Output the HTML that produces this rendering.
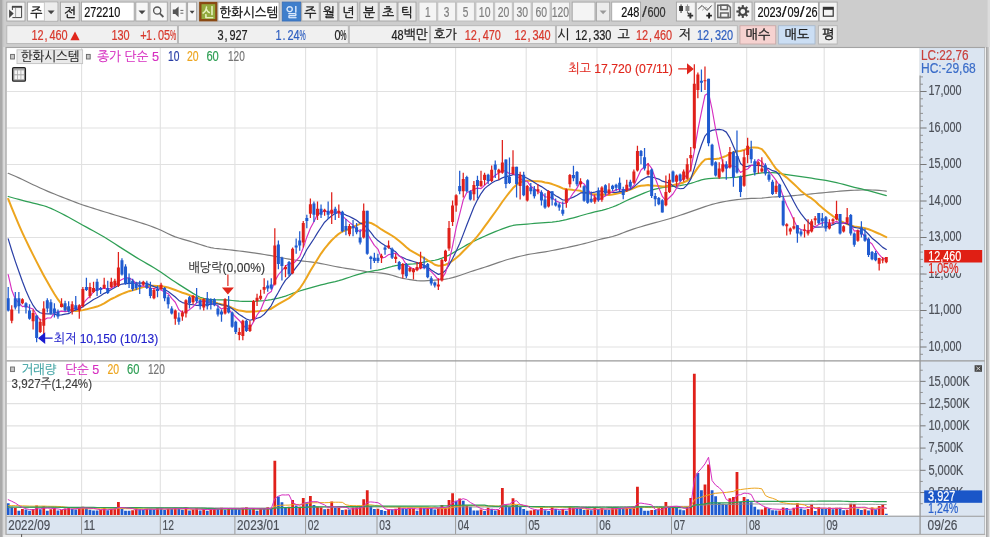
<!DOCTYPE html>
<html lang="ko">
<head>
<meta charset="utf-8">
<title>한화시스템 272210 일봉 차트</title>
<style>
html,body{margin:0;padding:0;background:#cdcdcd;overflow:hidden}
svg{display:block;will-change:transform;transform:translateZ(0);filter:blur(0.3px)}
text{white-space:pre}
</style>
</head>
<body>
<svg width="990" height="537" viewBox="0 0 990 537">
<rect x="0.00" y="0.00" width="990.00" height="537.00" fill="#cdcdcd" />
<rect x="0.00" y="0.00" width="2.40" height="537.00" fill="#a9a9a9" />
<rect x="2.40" y="0.00" width="0.90" height="537.00" fill="#bcbcbc" />
<rect x="3.30" y="47.00" width="2.60" height="490.00" fill="#dcdcdc" />
<rect x="987.60" y="0.00" width="2.40" height="47.00" fill="#dcdcdc" />
<rect x="986.00" y="47.00" width="1.70" height="490.00" fill="#a8a8a8" />
<rect x="987.70" y="47.00" width="1.30" height="490.00" fill="#c6c6c6" />
<rect x="989.00" y="47.00" width="1.00" height="490.00" fill="#e6e6e6" />
<rect x="6.80" y="2.10" width="18.20" height="18.90" fill="#f4f4f4" stroke="#a4a4a4" stroke-width="0.9" />
<g stroke="#444" fill="none"><path d="M12.4 17.6 H21.6 V6.6" stroke-width="1"/><line x1="11.9" y1="6.8" x2="22.1" y2="6.8" stroke-width="1.9"/><line x1="12.4" y1="6.8" x2="12.4" y2="10" stroke-width="1"/><line x1="15.6" y1="8" x2="15.6" y2="17.2" stroke="#999" stroke-width="0.9"/></g><path d="M9.1 9.4 L13.7 13.6 L9.1 17.9 Z" fill="#444"/>
<rect x="27.60" y="2.10" width="30.20" height="18.90" fill="#ffffff" stroke="#a4a4a4" stroke-width="0.9" />
<rect x="44.40" y="2.60" width="12.90" height="17.90" fill="#ededed" />
<line x1="44.40" y1="2.10" x2="44.40" y2="21.00" stroke="#c4c4c4" stroke-width="0.9" />
<text x="30.30" y="16.60" font-size="13" fill="#111" stroke="#111" stroke-width="0.3" font-family="'Liberation Sans','NanumGothic','Noto Sans CJK KR',sans-serif" >주</text>
<path d="M47.6 10.4 L54.6 10.4 L51.1 14.2 Z" fill="#444"/>
<rect x="60.40" y="2.10" width="18.80" height="18.90" fill="#ececec" stroke="#a4a4a4" stroke-width="0.9" />
<text x="63.80" y="16.60" font-size="13" fill="#111" stroke="#111" stroke-width="0.3" font-family="'Liberation Sans','NanumGothic','Noto Sans CJK KR',sans-serif" >전</text>
<rect x="81.40" y="2.10" width="52.80" height="18.90" fill="#ffffff" stroke="#a4a4a4" stroke-width="0.9" />
<text transform="translate(84.20 16.60) scale(0.78 1)" x="0.00 7.69 15.38 23.08 30.77 38.46" y="0" font-size="14" fill="#111" stroke="#111" stroke-width="0.22" font-family="'Liberation Sans','NanumGothic','Noto Sans CJK KR',sans-serif" >272210</text>
<rect x="135.80" y="2.10" width="12.40" height="18.90" fill="#f6f6f6" stroke="#a4a4a4" stroke-width="0.9" />
<path d="M138.5 10.4 L145.5 10.4 L142 14.2 Z" fill="#444"/>
<rect x="150.00" y="2.10" width="17.30" height="18.90" fill="#f6f6f6" stroke="#a4a4a4" stroke-width="0.9" />
<circle cx="157.2" cy="10.6" r="3.6" fill="none" stroke="#555" stroke-width="1.3"/><line x1="159.8" y1="13.4" x2="163.4" y2="17" stroke="#555" stroke-width="1.8"/>
<rect x="170.60" y="2.10" width="15.70" height="18.90" fill="#f6f6f6" stroke="#a4a4a4" stroke-width="0.9" />
<path d="M172.8 9.6 L175.2 9.6 L178.6 6.4 L178.6 17.2 L175.2 14 L172.8 14 Z" fill="#555"/><g stroke="#666" stroke-width="1"><line x1="180.4" y1="10.4" x2="183.4" y2="10.4"/><line x1="180.4" y1="13.2" x2="183.4" y2="13.2"/></g>
<rect x="187.60" y="2.10" width="9.00" height="18.90" fill="#f6f6f6" stroke="#a4a4a4" stroke-width="0.9" />
<path d="M189.6 10.8 L194.6 10.8 L192.1 13.8 Z" fill="#444"/>
<rect x="200.30" y="3.00" width="16.10" height="17.20" fill="#93aa3e" stroke="#8a4a14" stroke-width="2.4" />
<text x="202.20" y="16.60" font-size="13" fill="#eaf3c4" font-family="'Liberation Sans','NanumGothic','Noto Sans CJK KR',sans-serif" stroke="#eaf3c4" stroke-width="0.5">신</text>
<rect x="217.90" y="2.10" width="61.20" height="18.90" fill="#ffffff" stroke="#a4a4a4" stroke-width="0.9" />
<text x="219.60" y="16.60" font-size="13" fill="#111" stroke="#111" stroke-width="0.3" font-family="'Liberation Sans','NanumGothic','Noto Sans CJK KR',sans-serif" textLength="58.5" lengthAdjust="spacingAndGlyphs" >한화시스템</text>
<rect x="282.30" y="2.10" width="18.40" height="18.90" fill="#3f7fcc" stroke="#3a70b8" stroke-width="0.9" />
<text x="285.40" y="16.60" font-size="13" fill="#e6f0ff" stroke="#e6f0ff" stroke-width="0.3" font-family="'Liberation Sans','NanumGothic','Noto Sans CJK KR',sans-serif" >일</text>
<rect x="301.70" y="2.10" width="17.50" height="18.90" fill="#ececec" stroke="#a4a4a4" stroke-width="0.9" />
<text x="310.45" y="16.60" font-size="13" fill="#111" stroke="#111" stroke-width="0.3" font-family="'Liberation Sans','NanumGothic','Noto Sans CJK KR',sans-serif" text-anchor="middle" >주</text>
<rect x="320.40" y="2.10" width="17.40" height="18.90" fill="#ececec" stroke="#a4a4a4" stroke-width="0.9" />
<text x="329.10" y="16.60" font-size="13" fill="#111" stroke="#111" stroke-width="0.3" font-family="'Liberation Sans','NanumGothic','Noto Sans CJK KR',sans-serif" text-anchor="middle" >월</text>
<rect x="338.90" y="2.10" width="18.40" height="18.90" fill="#ececec" stroke="#a4a4a4" stroke-width="0.9" />
<text x="348.10" y="16.60" font-size="13" fill="#111" stroke="#111" stroke-width="0.3" font-family="'Liberation Sans','NanumGothic','Noto Sans CJK KR',sans-serif" text-anchor="middle" >년</text>
<rect x="359.90" y="2.10" width="18.30" height="18.90" fill="#ececec" stroke="#a4a4a4" stroke-width="0.9" />
<text x="369.05" y="16.60" font-size="13" fill="#111" stroke="#111" stroke-width="0.3" font-family="'Liberation Sans','NanumGothic','Noto Sans CJK KR',sans-serif" text-anchor="middle" >분</text>
<rect x="379.20" y="2.10" width="17.80" height="18.90" fill="#ececec" stroke="#a4a4a4" stroke-width="0.9" />
<text x="388.10" y="16.60" font-size="13" fill="#111" stroke="#111" stroke-width="0.3" font-family="'Liberation Sans','NanumGothic','Noto Sans CJK KR',sans-serif" text-anchor="middle" >초</text>
<rect x="398.00" y="2.10" width="18.00" height="18.90" fill="#ececec" stroke="#a4a4a4" stroke-width="0.9" />
<text x="407.00" y="16.60" font-size="13" fill="#111" stroke="#111" stroke-width="0.3" font-family="'Liberation Sans','NanumGothic','Noto Sans CJK KR',sans-serif" text-anchor="middle" >틱</text>
<rect x="419.00" y="2.10" width="17.70" height="18.90" fill="#f4f4f4" stroke="#bdbdbd" stroke-width="0.9" />
<text x="425.05" y="16.60" font-size="14" fill="#7e7e7e" stroke="#7e7e7e" stroke-width="0.2" font-family="'Liberation Sans','NanumGothic','Noto Sans CJK KR',sans-serif" textLength="5.6" lengthAdjust="spacingAndGlyphs" >1</text>
<rect x="437.80" y="2.10" width="17.70" height="18.90" fill="#f4f4f4" stroke="#bdbdbd" stroke-width="0.9" />
<text x="443.85" y="16.60" font-size="14" fill="#7e7e7e" stroke="#7e7e7e" stroke-width="0.2" font-family="'Liberation Sans','NanumGothic','Noto Sans CJK KR',sans-serif" textLength="5.6" lengthAdjust="spacingAndGlyphs" >3</text>
<rect x="456.70" y="2.10" width="17.70" height="18.90" fill="#f4f4f4" stroke="#bdbdbd" stroke-width="0.9" />
<text x="462.75" y="16.60" font-size="14" fill="#7e7e7e" stroke="#7e7e7e" stroke-width="0.2" font-family="'Liberation Sans','NanumGothic','Noto Sans CJK KR',sans-serif" textLength="5.6" lengthAdjust="spacingAndGlyphs" >5</text>
<rect x="475.90" y="2.10" width="17.50" height="18.90" fill="#f4f4f4" stroke="#bdbdbd" stroke-width="0.9" />
<text x="478.85" y="16.60" font-size="14" fill="#7e7e7e" stroke="#7e7e7e" stroke-width="0.2" font-family="'Liberation Sans','NanumGothic','Noto Sans CJK KR',sans-serif" textLength="11.6" lengthAdjust="spacingAndGlyphs" >10</text>
<rect x="494.70" y="2.10" width="17.60" height="18.90" fill="#f4f4f4" stroke="#bdbdbd" stroke-width="0.9" />
<text x="497.70" y="16.60" font-size="14" fill="#7e7e7e" stroke="#7e7e7e" stroke-width="0.2" font-family="'Liberation Sans','NanumGothic','Noto Sans CJK KR',sans-serif" textLength="11.6" lengthAdjust="spacingAndGlyphs" >20</text>
<rect x="513.60" y="2.10" width="17.50" height="18.90" fill="#f4f4f4" stroke="#bdbdbd" stroke-width="0.9" />
<text x="516.55" y="16.60" font-size="14" fill="#7e7e7e" stroke="#7e7e7e" stroke-width="0.2" font-family="'Liberation Sans','NanumGothic','Noto Sans CJK KR',sans-serif" textLength="11.6" lengthAdjust="spacingAndGlyphs" >30</text>
<rect x="532.40" y="2.10" width="17.70" height="18.90" fill="#f4f4f4" stroke="#bdbdbd" stroke-width="0.9" />
<text x="535.45" y="16.60" font-size="14" fill="#7e7e7e" stroke="#7e7e7e" stroke-width="0.2" font-family="'Liberation Sans','NanumGothic','Noto Sans CJK KR',sans-serif" textLength="11.6" lengthAdjust="spacingAndGlyphs" >60</text>
<rect x="551.40" y="2.10" width="18.10" height="18.90" fill="#f4f4f4" stroke="#bdbdbd" stroke-width="0.9" />
<text x="551.75" y="16.60" font-size="14" fill="#7e7e7e" stroke="#7e7e7e" stroke-width="0.2" font-family="'Liberation Sans','NanumGothic','Noto Sans CJK KR',sans-serif" textLength="17.4" lengthAdjust="spacingAndGlyphs" >120</text>
<rect x="572.20" y="2.10" width="22.80" height="18.90" fill="#f4f4f4" stroke="#a4a4a4" stroke-width="0.9" />
<rect x="596.40" y="2.10" width="13.30" height="18.90" fill="#ececec" stroke="#a4a4a4" stroke-width="0.9" />
<path d="M599.6 10.4 L606.6 10.4 L603.1 14.2 Z" fill="#999"/>
<rect x="611.70" y="2.10" width="28.90" height="18.90" fill="#ffffff" stroke="#a4a4a4" stroke-width="0.9" />
<text transform="translate(621.20 16.60) scale(0.78 1)" x="0.00 7.69 15.38" y="0" font-size="14" fill="#111" stroke="#111" stroke-width="0.22" font-family="'Liberation Sans','NanumGothic','Noto Sans CJK KR',sans-serif" >248</text>
<text transform="translate(642.00 16.60) scale(1.25 1)" x="0" y="0" font-size="14" fill="#333" stroke="#333" stroke-width="0.15" font-family="'Liberation Sans','NanumGothic','Noto Sans CJK KR',sans-serif" >/</text>
<text transform="translate(641.60 16.60) scale(0.78 1)" x="7.69 15.38 23.08" y="0" font-size="14" fill="#333" stroke="#333" stroke-width="0.22" font-family="'Liberation Sans','NanumGothic','Noto Sans CJK KR',sans-serif" >600</text>
<rect x="676.40" y="2.10" width="18.90" height="18.90" fill="#f4f4f4" stroke="#a4a4a4" stroke-width="0.9" />
<g fill="#333" stroke="#333"><rect x="679.1" y="6" width="3.9" height="5" stroke="none"/><line x1="681.05" y1="4.4" x2="681.05" y2="13" stroke-width="1"/><rect x="685.5" y="6" width="3.9" height="5" fill="#8a8a8a" stroke="none"/><line x1="687.45" y1="4.4" x2="687.45" y2="13" stroke="#8a8a8a" stroke-width="1"/><path d="M687.6 15.6 h5.6 M690.4 12.8 v5.6" stroke-width="1.9" fill="none"/><line x1="687.6" y1="12.6" x2="689.4" y2="14.6" stroke-width="1.2"/></g>
<rect x="696.30" y="2.10" width="18.00" height="18.90" fill="#f4f4f4" stroke="#a4a4a4" stroke-width="0.9" />
<g fill="none" stroke="#444" stroke-width="1"><path d="M698.2 9.1 L702.1 5.5 L707.1 10.5 L711.6 5.5"/><path d="M702 10.6 L705.8 7 L708.6 9.8" stroke="#999" stroke-width="0.8"/><path d="M706.3 15.6 h5.6 M709.1 12.8 v5.6" stroke="#222" stroke-width="1.9"/></g>
<rect x="715.40" y="2.10" width="17.60" height="18.90" fill="#f4f4f4" stroke="#a4a4a4" stroke-width="0.9" />
<g fill="none" stroke="#666" stroke-width="1.5"><path d="M717.8 5.2 h10.4 l2.2 2.2 v10.2 h-12.6 z"/><rect x="720.8" y="5.2" width="6.6" height="4.4"/><rect x="720.6" y="13" width="7.6" height="4.6"/></g>
<rect x="734.30" y="2.10" width="17.70" height="18.90" fill="#f4f4f4" stroke="#a4a4a4" stroke-width="0.9" />
<g transform="translate(742.8,11.5)"><circle r="3.5" fill="none" stroke="#444" stroke-width="2.2"/><g stroke="#444" stroke-width="2.1"><line x1="0" y1="-4.2" x2="0" y2="-6.4" transform="rotate(0)"/><line x1="0" y1="-4.2" x2="0" y2="-6.4" transform="rotate(45)"/><line x1="0" y1="-4.2" x2="0" y2="-6.4" transform="rotate(90)"/><line x1="0" y1="-4.2" x2="0" y2="-6.4" transform="rotate(135)"/><line x1="0" y1="-4.2" x2="0" y2="-6.4" transform="rotate(180)"/><line x1="0" y1="-4.2" x2="0" y2="-6.4" transform="rotate(225)"/><line x1="0" y1="-4.2" x2="0" y2="-6.4" transform="rotate(270)"/><line x1="0" y1="-4.2" x2="0" y2="-6.4" transform="rotate(315)"/></g></g>
<rect x="754.70" y="2.10" width="63.70" height="18.90" fill="#ffffff" stroke="#a4a4a4" stroke-width="0.9" />
<text transform="translate(781.80 16.60) scale(1.25 1)" x="0" y="0" font-size="14" fill="#111" stroke="#111" stroke-width="0.15" font-family="'Liberation Sans','NanumGothic','Noto Sans CJK KR',sans-serif" >/</text>
<text transform="translate(799.80 16.60) scale(1.25 1)" x="0" y="0" font-size="14" fill="#111" stroke="#111" stroke-width="0.15" font-family="'Liberation Sans','NanumGothic','Noto Sans CJK KR',sans-serif" >/</text>
<text transform="translate(757.40 16.60) scale(0.78 1)" x="0.00 7.69 15.38 23.08 38.46 46.15 61.54 69.23" y="0" font-size="14" fill="#111" stroke="#111" stroke-width="0.22" font-family="'Liberation Sans','NanumGothic','Noto Sans CJK KR',sans-serif" >20230926</text>
<rect x="819.20" y="2.10" width="18.00" height="18.90" fill="#f4f4f4" stroke="#a4a4a4" stroke-width="0.9" />
<g fill="none" stroke="#333" stroke-width="1.2"><rect x="823.4" y="7.4" width="9.8" height="8.8"/><line x1="823.4" y1="8.6" x2="833.2" y2="8.6" stroke-width="2.4"/></g>
<rect x="6.80" y="25.70" width="170.60" height="17.90" fill="#f0f0f0" stroke="#b4b4b4" stroke-width="0.9" />
<text transform="translate(31.40 39.60) scale(0.78 1)" x="0.00 7.69 16.67 23.08 30.77 38.46" y="0" font-size="14" fill="#d8382c" stroke="#d8382c" stroke-width="0.22" font-family="'Liberation Sans','NanumGothic','Noto Sans CJK KR',sans-serif" >12,460</text>
<path d="M70.4 40.2 L79.6 40.2 L75 31.4 Z" fill="#e0261c"/>
<text transform="translate(111.40 39.60) scale(0.78 1)" x="0.00 7.69 15.38" y="0" font-size="14" fill="#d8382c" stroke="#d8382c" stroke-width="0.22" font-family="'Liberation Sans','NanumGothic','Noto Sans CJK KR',sans-serif" >130</text>
<text transform="translate(169.90 39.60) scale(0.5 1)" x="0" y="0" font-size="14" fill="#d8382c" stroke="#d8382c" stroke-width="0.22" font-family="'Liberation Sans','NanumGothic','Noto Sans CJK KR',sans-serif" >%</text>
<text transform="translate(140.00 39.60) scale(0.78 1)" x="0.38 7.69 16.67 23.08 30.77" y="0" font-size="14" fill="#d8382c" stroke="#d8382c" stroke-width="0.22" font-family="'Liberation Sans','NanumGothic','Noto Sans CJK KR',sans-serif" >+1.05</text>
<rect x="178.40" y="25.70" width="169.90" height="17.90" fill="#f0f0f0" stroke="#b4b4b4" stroke-width="0.9" />
<text transform="translate(217.60 39.60) scale(0.78 1)" x="0.00 8.97 15.38 23.08 30.77" y="0" font-size="14" fill="#222" stroke="#222" stroke-width="0.22" font-family="'Liberation Sans','NanumGothic','Noto Sans CJK KR',sans-serif" >3,927</text>
<text transform="translate(299.50 39.60) scale(0.5 1)" x="0" y="0" font-size="14" fill="#2f5fc0" stroke="#2f5fc0" stroke-width="0.22" font-family="'Liberation Sans','NanumGothic','Noto Sans CJK KR',sans-serif" >%</text>
<text transform="translate(275.60 39.60) scale(0.78 1)" x="0.00 8.97 15.38 23.08" y="0" font-size="14" fill="#2f5fc0" stroke="#2f5fc0" stroke-width="0.22" font-family="'Liberation Sans','NanumGothic','Noto Sans CJK KR',sans-serif" >1.24</text>
<text transform="translate(340.30 39.60) scale(0.5 1)" x="0" y="0" font-size="14" fill="#222" stroke="#222" stroke-width="0.22" font-family="'Liberation Sans','NanumGothic','Noto Sans CJK KR',sans-serif" >%</text>
<text transform="translate(334.40 39.60) scale(0.78 1)" x="0.00" y="0" font-size="14" fill="#222" stroke="#222" stroke-width="0.22" font-family="'Liberation Sans','NanumGothic','Noto Sans CJK KR',sans-serif" >0</text>
<rect x="349.30" y="25.70" width="80.30" height="17.90" fill="#f0f0f0" stroke="#b4b4b4" stroke-width="0.9" />
<text transform="translate(391.60 39.60) scale(0.78 1)" x="0.00 7.69" y="0" font-size="14" fill="#222" stroke="#222" stroke-width="0.22" font-family="'Liberation Sans','NanumGothic','Noto Sans CJK KR',sans-serif" >48</text>
<text x="403.80" y="39.40" font-size="13" fill="#222" stroke="#222" stroke-width="0.3" font-family="'Liberation Sans','NanumGothic','Noto Sans CJK KR',sans-serif" textLength="24.0" lengthAdjust="spacingAndGlyphs" >백만</text>
<rect x="430.60" y="25.70" width="124.80" height="17.90" fill="#f0f0f0" stroke="#b4b4b4" stroke-width="0.9" />
<text x="433.80" y="39.40" font-size="13" fill="#222" stroke="#222" stroke-width="0.3" font-family="'Liberation Sans','NanumGothic','Noto Sans CJK KR',sans-serif" textLength="23.0" lengthAdjust="spacingAndGlyphs" >호가</text>
<text transform="translate(464.80 39.60) scale(0.78 1)" x="0.00 7.69 16.67 23.08 30.77 38.46" y="0" font-size="14" fill="#d8382c" stroke="#d8382c" stroke-width="0.22" font-family="'Liberation Sans','NanumGothic','Noto Sans CJK KR',sans-serif" >12,470</text>
<text transform="translate(514.40 39.60) scale(0.78 1)" x="0.00 7.69 16.67 23.08 30.77 38.46" y="0" font-size="14" fill="#d8382c" stroke="#d8382c" stroke-width="0.22" font-family="'Liberation Sans','NanumGothic','Noto Sans CJK KR',sans-serif" >12,340</text>
<rect x="556.40" y="25.70" width="180.90" height="17.90" fill="#f0f0f0" stroke="#b4b4b4" stroke-width="0.9" />
<text x="557.20" y="39.40" font-size="13" fill="#222" stroke="#222" stroke-width="0.3" font-family="'Liberation Sans','NanumGothic','Noto Sans CJK KR',sans-serif" >시</text>
<text transform="translate(575.20 39.60) scale(0.78 1)" x="0.00 7.69 16.67 23.08 30.77 38.46" y="0" font-size="14" fill="#222" stroke="#222" stroke-width="0.22" font-family="'Liberation Sans','NanumGothic','Noto Sans CJK KR',sans-serif" >12,330</text>
<text x="617.40" y="39.40" font-size="13" fill="#222" stroke="#222" stroke-width="0.3" font-family="'Liberation Sans','NanumGothic','Noto Sans CJK KR',sans-serif" >고</text>
<text transform="translate(636.00 39.60) scale(0.78 1)" x="0.00 7.69 16.67 23.08 30.77 38.46" y="0" font-size="14" fill="#d8382c" stroke="#d8382c" stroke-width="0.22" font-family="'Liberation Sans','NanumGothic','Noto Sans CJK KR',sans-serif" >12,460</text>
<text x="678.40" y="39.40" font-size="13" fill="#222" stroke="#222" stroke-width="0.3" font-family="'Liberation Sans','NanumGothic','Noto Sans CJK KR',sans-serif" >저</text>
<text transform="translate(697.00 39.60) scale(0.78 1)" x="0.00 7.69 16.67 23.08 30.77 38.46" y="0" font-size="14" fill="#2f5fc0" stroke="#2f5fc0" stroke-width="0.22" font-family="'Liberation Sans','NanumGothic','Noto Sans CJK KR',sans-serif" >12,320</text>
<rect x="740.00" y="25.70" width="35.70" height="18.30" fill="#f6d2d0" stroke="#c9aaa8" stroke-width="0.9" />
<text x="745.60" y="39.40" font-size="13" fill="#222" stroke="#222" stroke-width="0.3" font-family="'Liberation Sans','NanumGothic','Noto Sans CJK KR',sans-serif" textLength="24.6" lengthAdjust="spacingAndGlyphs" >매수</text>
<rect x="778.60" y="25.70" width="36.40" height="18.30" fill="#cbdef4" stroke="#a9b9cc" stroke-width="0.9" />
<text x="784.60" y="39.40" font-size="13" fill="#222" stroke="#222" stroke-width="0.3" font-family="'Liberation Sans','NanumGothic','Noto Sans CJK KR',sans-serif" textLength="24.6" lengthAdjust="spacingAndGlyphs" >매도</text>
<rect x="818.40" y="25.70" width="18.80" height="18.30" fill="#ececec" stroke="#b4b4b4" stroke-width="0.9" />
<text x="822.00" y="39.40" font-size="13" fill="#111" stroke="#111" stroke-width="0.3" font-family="'Liberation Sans','NanumGothic','Noto Sans CJK KR',sans-serif" >평</text>
<rect x="6.50" y="47.90" width="913.10" height="467.90" fill="#ffffff" />
<rect x="919.60" y="47.90" width="65.20" height="486.30" fill="#dbe5f1" />
<rect x="6.50" y="515.80" width="913.10" height="18.40" fill="#dbe5f1" />
<line x1="81.60" y1="47.90" x2="81.60" y2="515.80" stroke="#e1e1e1" stroke-width="1.1" />
<line x1="160.30" y1="47.90" x2="160.30" y2="515.80" stroke="#e1e1e1" stroke-width="1.1" />
<line x1="234.90" y1="47.90" x2="234.90" y2="515.80" stroke="#e1e1e1" stroke-width="1.1" />
<line x1="305.60" y1="47.90" x2="305.60" y2="515.80" stroke="#e1e1e1" stroke-width="1.1" />
<line x1="377.00" y1="47.90" x2="377.00" y2="515.80" stroke="#e1e1e1" stroke-width="1.1" />
<line x1="455.60" y1="47.90" x2="455.60" y2="515.80" stroke="#e1e1e1" stroke-width="1.1" />
<line x1="526.20" y1="47.90" x2="526.20" y2="515.80" stroke="#e1e1e1" stroke-width="1.1" />
<line x1="597.00" y1="47.90" x2="597.00" y2="515.80" stroke="#e1e1e1" stroke-width="1.1" />
<line x1="671.50" y1="47.90" x2="671.50" y2="515.80" stroke="#e1e1e1" stroke-width="1.1" />
<line x1="746.70" y1="47.90" x2="746.70" y2="515.80" stroke="#e1e1e1" stroke-width="1.1" />
<line x1="824.20" y1="47.90" x2="824.20" y2="515.80" stroke="#e1e1e1" stroke-width="1.1" />
<line x1="6.50" y1="347.00" x2="919.60" y2="347.00" stroke="#e1e1e1" stroke-width="1.1" />
<line x1="6.50" y1="310.50" x2="919.60" y2="310.50" stroke="#e1e1e1" stroke-width="1.1" />
<line x1="6.50" y1="274.00" x2="919.60" y2="274.00" stroke="#e1e1e1" stroke-width="1.1" />
<line x1="6.50" y1="237.50" x2="919.60" y2="237.50" stroke="#e1e1e1" stroke-width="1.1" />
<line x1="6.50" y1="201.00" x2="919.60" y2="201.00" stroke="#e1e1e1" stroke-width="1.1" />
<line x1="6.50" y1="164.50" x2="919.60" y2="164.50" stroke="#e1e1e1" stroke-width="1.1" />
<line x1="6.50" y1="128.00" x2="919.60" y2="128.00" stroke="#e1e1e1" stroke-width="1.1" />
<line x1="6.50" y1="91.50" x2="919.60" y2="91.50" stroke="#e1e1e1" stroke-width="1.1" />
<line x1="6.50" y1="492.56" x2="919.60" y2="492.56" stroke="#e1e1e1" stroke-width="1.1" />
<line x1="6.50" y1="470.32" x2="919.60" y2="470.32" stroke="#e1e1e1" stroke-width="1.1" />
<line x1="6.50" y1="448.08" x2="919.60" y2="448.08" stroke="#e1e1e1" stroke-width="1.1" />
<line x1="6.50" y1="425.84" x2="919.60" y2="425.84" stroke="#e1e1e1" stroke-width="1.1" />
<line x1="6.50" y1="403.60" x2="919.60" y2="403.60" stroke="#e1e1e1" stroke-width="1.1" />
<line x1="6.50" y1="381.36" x2="919.60" y2="381.36" stroke="#e1e1e1" stroke-width="1.1" />
<path d="M13.91 515.0V507.68h2.8V515.0zM21.02 515.0V508.92h2.8V515.0zM31.69 515.0V509.03h2.8V515.0zM35.24 515.0V505.46h2.8V515.0zM42.35 515.0V506.35h2.8V515.0zM49.46 515.0V509.35h2.8V515.0zM53.02 515.0V507.81h2.8V515.0zM60.13 515.0V510.12h2.8V515.0zM63.68 515.0V508.57h2.8V515.0zM67.23 515.0V507.35h2.8V515.0zM77.90 515.0V507.24h2.8V515.0zM81.45 515.0V506.79h2.8V515.0zM99.23 515.0V509.79h2.8V515.0zM102.78 515.0V507.85h2.8V515.0zM109.89 515.0V508.75h2.8V515.0zM113.45 515.0V508.53h2.8V515.0zM117.00 515.0V502.08h2.8V515.0zM131.22 515.0V510.19h2.8V515.0zM134.78 515.0V508.37h2.8V515.0zM145.44 515.0V508.73h2.8V515.0zM156.11 515.0V507.94h2.8V515.0zM166.77 515.0V508.78h2.8V515.0zM173.88 515.0V507.63h2.8V515.0zM184.55 515.0V507.23h2.8V515.0zM191.66 515.0V509.38h2.8V515.0zM195.22 515.0V508.08h2.8V515.0zM202.32 515.0V509.10h2.8V515.0zM209.44 515.0V508.42h2.8V515.0zM212.99 515.0V508.05h2.8V515.0zM220.10 515.0V507.63h2.8V515.0zM227.21 515.0V508.32h2.8V515.0zM241.43 515.0V507.76h2.8V515.0zM244.98 515.0V507.36h2.8V515.0zM252.09 515.0V508.43h2.8V515.0zM259.21 515.0V508.29h2.8V515.0zM266.31 515.0V507.18h2.8V515.0zM273.43 515.0V460.71h2.8V515.0zM287.65 515.0V506.79h2.8V515.0zM291.20 515.0V500.12h2.8V515.0zM298.31 515.0V506.79h2.8V515.0zM301.87 515.0V498.08h2.8V515.0zM308.98 515.0V496.12h2.8V515.0zM316.09 515.0V506.79h2.8V515.0zM319.64 515.0V507.24h2.8V515.0zM326.75 515.0V508.87h2.8V515.0zM330.31 515.0V501.46h2.8V515.0zM337.42 515.0V507.67h2.8V515.0zM344.53 515.0V509.39h2.8V515.0zM351.64 515.0V507.59h2.8V515.0zM355.19 515.0V507.31h2.8V515.0zM358.75 515.0V506.79h2.8V515.0zM362.30 515.0V499.23h2.8V515.0zM365.86 515.0V490.34h2.8V515.0zM376.52 515.0V508.72h2.8V515.0zM387.19 515.0V509.37h2.8V515.0zM394.30 515.0V508.81h2.8V515.0zM397.85 515.0V507.33h2.8V515.0zM408.52 515.0V508.61h2.8V515.0zM412.07 515.0V508.39h2.8V515.0zM419.18 515.0V507.53h2.8V515.0zM426.29 515.0V507.63h2.8V515.0zM436.96 515.0V507.68h2.8V515.0zM440.51 515.0V505.01h2.8V515.0zM444.07 515.0V507.68h2.8V515.0zM447.62 515.0V500.03h2.8V515.0zM451.18 515.0V493.18h2.8V515.0zM458.29 515.0V498.52h2.8V515.0zM465.40 515.0V505.46h2.8V515.0zM479.62 515.0V509.58h2.8V515.0zM486.73 515.0V507.63h2.8V515.0zM497.39 515.0V510.01h2.8V515.0zM500.95 515.0V488.11h2.8V515.0zM511.61 515.0V498.34h2.8V515.0zM529.39 515.0V510.58h2.8V515.0zM532.94 515.0V509.66h2.8V515.0zM540.05 515.0V507.80h2.8V515.0zM550.72 515.0V507.34h2.8V515.0zM561.38 515.0V508.90h2.8V515.0zM568.49 515.0V506.35h2.8V515.0zM572.05 515.0V507.51h2.8V515.0zM586.27 515.0V509.57h2.8V515.0zM593.38 515.0V508.02h2.8V515.0zM600.49 515.0V507.99h2.8V515.0zM611.15 515.0V507.87h2.8V515.0zM614.71 515.0V507.21h2.8V515.0zM625.37 515.0V507.84h2.8V515.0zM632.48 515.0V506.79h2.8V515.0zM636.04 515.0V486.78h2.8V515.0zM650.26 515.0V509.91h2.8V515.0zM657.37 515.0V508.33h2.8V515.0zM660.92 515.0V507.32h2.8V515.0zM664.48 515.0V501.90h2.8V515.0zM671.59 515.0V507.20h2.8V515.0zM685.81 515.0V506.79h2.8V515.0zM689.36 515.0V497.90h2.8V515.0zM692.92 515.0V373.80h2.8V515.0zM703.58 515.0V484.55h2.8V515.0zM707.14 515.0V464.54h2.8V515.0zM728.47 515.0V498.34h2.8V515.0zM732.02 515.0V497.01h2.8V515.0zM735.58 515.0V472.10h2.8V515.0zM742.69 515.0V497.01h2.8V515.0zM760.46 515.0V509.44h2.8V515.0zM764.02 515.0V507.35h2.8V515.0zM778.24 515.0V510.40h2.8V515.0zM781.79 515.0V507.51h2.8V515.0zM792.46 515.0V507.81h2.8V515.0zM796.01 515.0V503.24h2.8V515.0zM806.68 515.0V508.88h2.8V515.0zM810.23 515.0V504.57h2.8V515.0zM817.34 515.0V507.26h2.8V515.0zM828.01 515.0V507.40h2.8V515.0zM835.12 515.0V507.64h2.8V515.0zM845.78 515.0V510.01h2.8V515.0zM849.34 515.0V503.68h2.8V515.0zM852.89 515.0V504.12h2.8V515.0zM863.56 515.0V509.37h2.8V515.0zM870.67 515.0V507.49h2.8V515.0zM877.78 515.0V505.90h2.8V515.0zM881.33 515.0V504.57h2.8V515.0z" fill="#e0201a"/>
<path d="M6.80 515.0V503.24h2.8V515.0zM10.35 515.0V506.79h2.8V515.0zM17.47 515.0V510.70h2.8V515.0zM24.58 515.0V509.58h2.8V515.0zM28.13 515.0V510.75h2.8V515.0zM38.80 515.0V509.32h2.8V515.0zM45.91 515.0V510.63h2.8V515.0zM56.57 515.0V510.50h2.8V515.0zM70.79 515.0V508.77h2.8V515.0zM74.34 515.0V509.46h2.8V515.0zM85.01 515.0V507.69h2.8V515.0zM88.56 515.0V509.87h2.8V515.0zM92.12 515.0V510.42h2.8V515.0zM95.67 515.0V510.52h2.8V515.0zM106.34 515.0V510.28h2.8V515.0zM120.56 515.0V508.88h2.8V515.0zM124.12 515.0V510.73h2.8V515.0zM127.67 515.0V510.75h2.8V515.0zM138.33 515.0V509.34h2.8V515.0zM141.89 515.0V509.77h2.8V515.0zM149.00 515.0V509.24h2.8V515.0zM152.55 515.0V509.83h2.8V515.0zM159.66 515.0V508.30h2.8V515.0zM163.22 515.0V510.04h2.8V515.0zM170.33 515.0V508.97h2.8V515.0zM177.44 515.0V508.18h2.8V515.0zM181.00 515.0V509.87h2.8V515.0zM188.10 515.0V510.52h2.8V515.0zM198.77 515.0V510.39h2.8V515.0zM205.88 515.0V510.82h2.8V515.0zM216.54 515.0V508.78h2.8V515.0zM223.66 515.0V509.77h2.8V515.0zM230.76 515.0V508.70h2.8V515.0zM234.32 515.0V508.76h2.8V515.0zM237.88 515.0V509.23h2.8V515.0zM248.54 515.0V509.16h2.8V515.0zM255.65 515.0V510.74h2.8V515.0zM262.76 515.0V508.50h2.8V515.0zM269.87 515.0V507.83h2.8V515.0zM276.98 515.0V496.56h2.8V515.0zM280.54 515.0V502.17h2.8V515.0zM284.09 515.0V507.68h2.8V515.0zM294.76 515.0V505.46h2.8V515.0zM305.42 515.0V502.35h2.8V515.0zM312.53 515.0V505.01h2.8V515.0zM323.20 515.0V509.26h2.8V515.0zM333.86 515.0V507.84h2.8V515.0zM340.97 515.0V509.91h2.8V515.0zM348.08 515.0V509.60h2.8V515.0zM369.41 515.0V505.90h2.8V515.0zM372.97 515.0V509.12h2.8V515.0zM380.08 515.0V509.97h2.8V515.0zM383.63 515.0V510.96h2.8V515.0zM390.74 515.0V509.56h2.8V515.0zM401.41 515.0V508.33h2.8V515.0zM404.96 515.0V509.00h2.8V515.0zM415.63 515.0V510.77h2.8V515.0zM422.74 515.0V507.99h2.8V515.0zM429.85 515.0V507.92h2.8V515.0zM433.40 515.0V509.47h2.8V515.0zM454.73 515.0V500.83h2.8V515.0zM461.84 515.0V500.83h2.8V515.0zM468.95 515.0V506.79h2.8V515.0zM472.51 515.0V510.40h2.8V515.0zM476.06 515.0V510.59h2.8V515.0zM483.17 515.0V510.88h2.8V515.0zM490.28 515.0V508.63h2.8V515.0zM493.84 515.0V510.41h2.8V515.0zM504.50 515.0V505.01h2.8V515.0zM508.06 515.0V506.79h2.8V515.0zM515.17 515.0V505.01h2.8V515.0zM518.72 515.0V506.79h2.8V515.0zM522.28 515.0V509.12h2.8V515.0zM525.83 515.0V510.65h2.8V515.0zM536.50 515.0V509.96h2.8V515.0zM543.61 515.0V510.36h2.8V515.0zM547.16 515.0V510.89h2.8V515.0zM554.27 515.0V508.95h2.8V515.0zM557.83 515.0V510.41h2.8V515.0zM564.94 515.0V510.87h2.8V515.0zM575.60 515.0V507.67h2.8V515.0zM579.16 515.0V508.31h2.8V515.0zM582.71 515.0V509.98h2.8V515.0zM589.82 515.0V510.34h2.8V515.0zM596.93 515.0V508.94h2.8V515.0zM604.04 515.0V509.71h2.8V515.0zM607.60 515.0V510.12h2.8V515.0zM618.26 515.0V507.71h2.8V515.0zM621.82 515.0V507.89h2.8V515.0zM628.93 515.0V508.14h2.8V515.0zM639.59 515.0V505.90h2.8V515.0zM643.15 515.0V510.86h2.8V515.0zM646.70 515.0V510.87h2.8V515.0zM653.81 515.0V509.98h2.8V515.0zM668.03 515.0V507.39h2.8V515.0zM675.14 515.0V507.32h2.8V515.0zM678.70 515.0V509.58h2.8V515.0zM682.25 515.0V510.13h2.8V515.0zM696.47 515.0V472.99h2.8V515.0zM700.03 515.0V490.34h2.8V515.0zM710.69 515.0V490.34h2.8V515.0zM714.25 515.0V496.30h2.8V515.0zM717.80 515.0V502.79h2.8V515.0zM721.36 515.0V503.68h2.8V515.0zM724.91 515.0V504.57h2.8V515.0zM739.13 515.0V501.46h2.8V515.0zM746.24 515.0V499.23h2.8V515.0zM749.80 515.0V502.35h2.8V515.0zM753.35 515.0V506.79h2.8V515.0zM756.91 515.0V509.46h2.8V515.0zM767.57 515.0V508.20h2.8V515.0zM771.13 515.0V510.32h2.8V515.0zM774.68 515.0V510.49h2.8V515.0zM785.35 515.0V507.89h2.8V515.0zM788.90 515.0V510.42h2.8V515.0zM799.57 515.0V508.46h2.8V515.0zM803.12 515.0V509.63h2.8V515.0zM813.79 515.0V510.92h2.8V515.0zM820.90 515.0V508.49h2.8V515.0zM824.45 515.0V508.96h2.8V515.0zM831.56 515.0V509.32h2.8V515.0zM838.67 515.0V507.81h2.8V515.0zM842.23 515.0V510.17h2.8V515.0zM856.45 515.0V508.73h2.8V515.0zM860.00 515.0V509.98h2.8V515.0zM867.11 515.0V510.47h2.8V515.0zM874.22 515.0V509.62h2.8V515.0zM884.89 515.0V513.73h2.8V515.0z" fill="#1f5bd0"/>
<path d="M8.20 507.35 L11.75 507.34 L15.31 507.34 L18.87 507.37 L22.42 507.38 L25.98 507.39 L29.53 507.42 L33.09 507.43 L36.64 507.41 L40.20 507.43 L43.75 507.41 L47.31 507.44 L50.86 507.45 L54.42 507.45 L57.97 507.48 L61.53 507.50 L65.08 507.50 L68.64 507.50 L72.19 507.51 L75.75 507.53 L79.30 507.52 L82.86 507.51 L86.41 507.51 L89.97 507.53 L93.52 507.56 L97.08 507.58 L100.63 507.60 L104.19 507.60 L107.74 507.62 L111.30 507.63 L114.85 507.64 L118.41 507.59 L121.96 507.60 L125.52 507.62 L129.07 507.65 L132.62 507.67 L136.18 507.68 L139.73 507.69 L143.29 507.71 L146.84 507.72 L150.40 507.73 L153.95 507.75 L157.51 507.75 L161.06 507.76 L164.62 507.77 L168.17 507.78 L171.73 507.79 L175.28 507.79 L178.84 507.80 L182.40 507.82 L185.95 507.81 L189.50 507.84 L193.06 507.85 L196.62 507.85 L200.17 507.88 L203.72 507.89 L207.28 507.91 L210.84 507.92 L214.39 507.92 L217.94 507.93 L221.50 507.93 L225.06 507.95 L228.61 507.96 L232.16 507.96 L235.72 507.97 L239.28 507.99 L242.83 507.99 L246.38 507.98 L249.94 508.00 L253.50 508.00 L257.05 508.03 L260.61 508.03 L264.16 508.04 L267.71 508.04 L271.27 508.04 L274.82 507.64 L278.38 507.55 L281.94 507.51 L285.49 507.51 L289.05 507.50 L292.60 507.44 L296.16 507.42 L299.71 507.41 L303.26 507.33 L306.82 507.29 L310.38 507.19 L313.93 507.17 L317.49 507.16 L321.04 507.16 L324.60 507.17 L328.15 507.18 L331.70 507.13 L335.26 507.13 L338.81 507.13 L342.37 507.15 L345.93 507.16 L349.48 507.18 L353.04 507.18 L356.59 507.17 L360.14 507.17 L363.70 507.09 L367.25 506.95 L370.81 506.94 L374.37 506.95 L377.92 506.96 L381.48 506.98 L385.03 507.00 L388.58 507.02 L392.14 507.03 L395.69 507.04 L399.25 507.04 L402.81 507.04 L406.36 507.06 L409.92 507.06 L413.47 507.07 L417.03 507.09 L420.58 507.17 L424.13 507.24 L427.69 507.32 L431.25 507.39 L434.80 507.45 L438.36 507.45 L441.91 507.43 L445.47 507.41 L449.02 507.33 L452.57 507.20 L456.13 507.11 L459.69 507.02 L463.24 506.99 L466.80 506.95 L470.35 506.96 L473.91 506.96 L477.46 506.97 L481.01 506.98 L484.57 506.98 L488.12 506.96 L491.68 506.96 L495.24 506.99 L498.79 507.00 L502.35 506.82 L505.90 506.80 L509.45 506.80 L513.01 506.73 L516.57 506.68 L520.12 506.65 L523.68 506.64 L527.23 506.65 L530.79 506.67 L534.34 506.67 L537.90 506.68 L541.45 506.67 L545.01 506.74 L548.56 506.76 L552.12 506.73 L555.67 506.71 L559.23 506.72 L562.78 506.72 L566.34 506.73 L569.89 506.70 L573.45 506.69 L577.00 506.68 L580.56 506.67 L584.11 506.69 L587.67 506.70 L591.22 506.70 L594.78 506.69 L598.33 506.69 L601.89 506.70 L605.44 506.71 L609.00 506.71 L612.55 506.72 L616.11 506.69 L619.66 506.67 L623.22 506.67 L626.77 506.65 L630.33 506.64 L633.88 506.61 L637.44 506.43 L640.99 506.41 L644.55 506.43 L648.10 506.46 L651.66 506.46 L655.21 506.47 L658.77 506.47 L662.32 506.46 L665.88 506.39 L669.43 506.39 L672.99 506.39 L676.54 506.37 L680.10 506.38 L683.65 506.38 L687.21 506.37 L690.76 506.28 L694.32 505.17 L697.87 504.88 L701.43 505.12 L704.98 505.02 L708.54 504.71 L712.09 504.57 L715.65 504.48 L719.20 504.50 L722.76 504.49 L726.31 504.47 L729.87 504.47 L733.42 504.42 L736.98 504.22 L740.53 504.19 L744.09 504.11 L747.64 504.05 L751.20 503.99 L754.75 503.97 L758.31 504.04 L761.86 504.05 L765.42 504.05 L768.97 504.03 L772.53 504.04 L776.08 504.05 L779.64 504.07 L783.19 504.07 L786.75 504.08 L790.30 504.18 L793.86 504.32 L797.41 504.30 L800.97 504.29 L804.52 504.30 L808.08 504.29 L811.63 504.24 L815.19 504.25 L818.74 504.23 L822.30 504.23 L825.85 504.24 L829.41 504.24 L832.96 504.24 L836.52 504.23 L840.07 504.23 L843.63 504.22 L847.18 504.24 L850.74 504.21 L854.29 504.18 L857.85 504.18 L861.40 504.19 L864.96 504.20 L868.51 504.25 L872.07 504.25 L875.62 504.33 L879.18 504.43 L882.73 504.46 L886.29 504.59" fill="none" stroke="#8a8a8a" stroke-width="0.9" stroke-linejoin="round" stroke-linecap="round" />
<path d="M8.20 505.68 L11.75 505.64 L15.31 505.64 L18.87 505.79 L22.42 505.85 L25.98 505.94 L29.53 506.10 L33.09 506.17 L36.64 506.05 L40.20 506.14 L43.75 506.07 L47.31 506.22 L50.86 506.30 L54.42 506.31 L57.97 506.45 L61.53 506.57 L65.08 507.06 L68.64 507.49 L72.19 507.99 L75.75 508.52 L79.30 508.72 L82.86 508.72 L86.41 508.72 L89.97 508.68 L93.52 508.75 L97.08 508.80 L100.63 508.75 L104.19 508.69 L107.74 508.93 L111.30 508.91 L114.85 509.02 L118.41 508.59 L121.96 508.56 L125.52 508.71 L129.07 508.72 L132.62 508.73 L136.18 508.72 L139.73 508.82 L143.29 508.87 L146.84 508.83 L150.40 508.93 L153.95 509.08 L157.51 509.09 L161.06 509.02 L164.62 509.00 L168.17 508.91 L171.73 508.87 L175.28 508.86 L178.84 508.75 L182.40 508.81 L185.95 508.74 L189.50 509.16 L193.06 509.19 L196.62 509.06 L200.17 509.04 L203.72 508.98 L207.28 509.11 L210.84 509.06 L214.39 508.98 L217.94 508.98 L221.50 508.90 L225.06 508.89 L228.61 508.91 L232.16 508.93 L235.72 508.87 L239.28 508.89 L242.83 508.83 L246.38 508.82 L249.94 508.87 L253.50 508.79 L257.05 508.97 L260.61 508.86 L264.16 508.82 L267.71 508.77 L271.27 508.64 L274.82 506.22 L278.38 505.51 L281.94 505.20 L285.49 505.18 L289.05 505.08 L292.60 504.70 L296.16 504.49 L299.71 504.41 L303.26 503.88 L306.82 503.56 L310.38 502.90 L313.93 502.77 L317.49 502.74 L321.04 502.64 L324.60 502.68 L328.15 502.59 L331.70 502.25 L335.26 502.22 L338.81 502.24 L342.37 502.34 L345.93 504.78 L349.48 505.43 L353.04 505.70 L356.59 505.68 L360.14 505.68 L363.70 505.64 L367.25 504.88 L370.81 504.84 L374.37 505.39 L377.92 505.71 L381.48 506.40 L385.03 506.70 L388.58 506.83 L392.14 506.94 L395.69 506.92 L399.25 506.84 L402.81 507.19 L406.36 507.25 L409.92 507.29 L413.47 507.22 L417.03 507.29 L420.58 507.18 L424.13 507.20 L427.69 507.22 L431.25 507.27 L434.80 507.79 L438.36 508.65 L441.91 508.61 L445.47 508.54 L449.02 508.10 L452.57 507.26 L456.13 506.76 L459.69 506.22 L463.24 505.78 L466.80 505.61 L470.35 505.58 L473.91 505.69 L477.46 505.77 L481.01 505.82 L484.57 505.94 L488.12 505.78 L491.68 505.84 L495.24 505.96 L498.79 506.08 L502.35 505.09 L505.90 504.86 L509.45 504.82 L513.01 504.49 L516.57 504.35 L520.12 504.69 L523.68 505.49 L527.23 505.98 L530.79 506.58 L534.34 507.02 L537.90 507.25 L541.45 507.30 L545.01 507.30 L548.56 507.31 L552.12 507.20 L555.67 507.10 L559.23 507.24 L562.78 507.26 L566.34 507.28 L569.89 507.10 L573.45 508.07 L577.00 508.20 L580.56 508.27 L584.11 508.86 L587.67 509.08 L591.22 509.26 L594.78 509.21 L598.33 509.12 L601.89 508.99 L605.44 508.99 L609.00 509.00 L612.55 509.00 L616.11 508.85 L619.66 508.69 L623.22 508.72 L626.77 508.66 L630.33 508.55 L633.88 508.44 L637.44 507.24 L640.99 507.22 L644.55 507.38 L648.10 507.54 L651.66 507.62 L655.21 507.62 L658.77 507.56 L662.32 507.41 L665.88 507.10 L669.43 507.03 L672.99 506.99 L676.54 506.87 L680.10 506.84 L683.65 506.95 L687.21 506.93 L690.76 506.44 L694.32 499.74 L697.87 497.99 L701.43 497.10 L704.98 495.99 L708.54 494.88 L712.09 494.10 L715.65 493.37 L719.20 492.97 L722.76 492.66 L726.31 492.39 L729.87 491.89 L733.42 491.37 L736.98 489.88 L740.53 489.59 L744.09 489.08 L747.64 488.67 L751.20 488.31 L754.75 488.14 L758.31 488.28 L761.86 488.85 L765.42 495.53 L768.97 497.29 L772.53 498.29 L776.08 499.59 L779.64 501.88 L783.19 502.74 L786.75 503.32 L790.30 503.70 L793.86 503.91 L797.41 503.84 L800.97 504.35 L804.52 504.98 L808.08 506.82 L811.63 506.97 L815.19 507.67 L818.74 508.07 L822.30 508.38 L825.85 508.49 L829.41 508.38 L832.96 508.38 L836.52 508.39 L840.07 508.37 L843.63 508.36 L847.18 508.34 L850.74 508.00 L854.29 507.83 L857.85 507.88 L861.40 507.85 L864.96 507.93 L868.51 508.29 L872.07 508.25 L875.62 508.25 L879.18 508.10 L882.73 508.10 L886.29 508.24" fill="none" stroke="#eda51e" stroke-width="1.0" stroke-linejoin="round" stroke-linecap="round" />
<path d="M8.20 507.02 L11.75 507.00 L15.31 507.00 L18.87 507.05 L22.42 507.07 L25.98 507.10 L29.53 507.15 L33.09 507.18 L36.64 507.14 L40.20 507.17 L43.75 507.15 L47.31 507.19 L50.86 507.22 L54.42 507.22 L57.97 507.27 L61.53 507.31 L65.08 507.33 L68.64 507.32 L72.19 507.34 L75.75 507.37 L79.30 507.36 L82.86 507.35 L86.41 507.35 L89.97 507.38 L93.52 507.43 L97.08 507.48 L100.63 507.51 L104.19 507.51 L107.74 507.56 L111.30 507.58 L114.85 507.59 L118.41 507.50 L121.96 507.52 L125.52 507.57 L129.07 507.62 L132.62 507.66 L136.18 507.67 L139.73 507.70 L143.29 507.73 L146.84 507.75 L150.40 507.78 L153.95 507.81 L157.51 507.82 L161.06 507.83 L164.62 507.87 L168.17 507.88 L171.73 507.91 L175.28 507.91 L178.84 507.91 L182.40 507.95 L185.95 507.94 L189.50 507.99 L193.06 508.02 L196.62 508.02 L200.17 508.07 L203.72 508.09 L207.28 508.29 L210.84 508.45 L214.39 508.61 L217.94 508.78 L221.50 508.85 L225.06 508.90 L228.61 508.91 L232.16 508.88 L235.72 508.87 L239.28 508.87 L242.83 508.82 L246.38 508.79 L249.94 508.85 L253.50 508.84 L257.05 508.91 L260.61 508.87 L264.16 508.86 L267.71 508.85 L271.27 508.80 L274.82 507.98 L278.38 507.78 L281.94 507.69 L285.49 507.67 L289.05 507.63 L292.60 507.51 L296.16 507.49 L299.71 507.47 L303.26 507.28 L306.82 507.14 L310.38 506.90 L313.93 506.82 L317.49 506.80 L321.04 506.75 L324.60 506.76 L328.15 506.77 L331.70 506.76 L335.26 506.74 L338.81 506.69 L342.37 506.68 L345.93 506.66 L349.48 506.68 L353.04 506.65 L356.59 506.61 L360.14 506.58 L363.70 506.41 L367.25 506.09 L370.81 506.05 L374.37 506.07 L377.92 506.05 L381.48 506.07 L385.03 506.10 L388.58 506.13 L392.14 506.15 L395.69 506.13 L399.25 506.13 L402.81 506.10 L406.36 506.09 L409.92 506.10 L413.47 506.07 L417.03 506.10 L420.58 506.04 L424.13 506.03 L427.69 506.03 L431.25 506.01 L434.80 506.04 L438.36 506.01 L441.91 505.95 L445.47 505.94 L449.02 505.79 L452.57 505.52 L456.13 505.41 L459.69 505.26 L463.24 505.12 L466.80 505.07 L470.35 505.01 L473.91 505.04 L477.46 505.08 L481.01 505.12 L484.57 505.17 L488.12 505.95 L491.68 506.15 L495.24 506.29 L498.79 506.33 L502.35 506.01 L505.90 506.10 L509.45 506.12 L513.01 505.98 L516.57 506.09 L520.12 506.17 L523.68 506.38 L527.23 506.48 L530.79 506.54 L534.34 506.58 L537.90 506.59 L541.45 506.58 L545.01 506.72 L548.56 506.77 L552.12 506.77 L555.67 506.75 L559.23 506.77 L562.78 506.76 L566.34 506.81 L569.89 506.80 L573.45 506.81 L577.00 506.95 L580.56 507.25 L584.11 507.32 L587.67 507.32 L591.22 507.35 L594.78 507.32 L598.33 507.29 L601.89 507.26 L605.44 507.27 L609.00 507.29 L612.55 507.30 L616.11 507.28 L619.66 507.26 L623.22 507.24 L626.77 507.23 L630.33 507.19 L633.88 507.18 L637.44 506.83 L640.99 506.80 L644.55 506.85 L648.10 506.87 L651.66 506.91 L655.21 506.99 L658.77 507.00 L662.32 507.12 L665.88 507.27 L669.43 507.38 L672.99 507.52 L676.54 507.63 L680.10 507.70 L683.65 507.75 L687.21 507.69 L690.76 507.48 L694.32 505.22 L697.87 504.59 L701.43 504.30 L704.98 503.90 L708.54 503.13 L712.09 502.80 L715.65 502.94 L719.20 502.90 L722.76 502.85 L726.31 502.96 L729.87 502.84 L733.42 502.68 L736.98 502.06 L740.53 501.91 L744.09 501.68 L747.64 501.51 L751.20 501.38 L754.75 501.37 L758.31 501.35 L761.86 501.33 L765.42 501.33 L768.97 501.32 L772.53 501.31 L776.08 501.34 L779.64 501.33 L783.19 501.35 L786.75 501.36 L790.30 501.40 L793.86 501.40 L797.41 501.28 L800.97 501.27 L804.52 501.25 L808.08 501.27 L811.63 501.19 L815.19 501.24 L818.74 501.20 L822.30 501.18 L825.85 501.19 L829.41 501.20 L832.96 501.22 L836.52 501.22 L840.07 501.22 L843.63 501.25 L847.18 501.31 L850.74 501.59 L854.29 501.56 L857.85 501.52 L861.40 501.51 L864.96 501.50 L868.51 501.51 L872.07 501.49 L875.62 501.53 L879.18 501.60 L882.73 501.55 L886.29 501.66" fill="none" stroke="#2f9f55" stroke-width="1.2" stroke-linejoin="round" stroke-linecap="round" />
<path d="M8.20 499.68 L11.75 501.28 L15.31 503.06 L18.87 505.44 L22.42 507.47 L25.98 508.74 L29.53 509.53 L33.09 509.80 L36.64 508.75 L40.20 508.83 L43.75 508.18 L47.31 508.16 L50.86 508.22 L54.42 508.69 L57.97 508.93 L61.53 509.68 L65.08 509.27 L68.64 508.87 L72.19 509.06 L75.75 508.85 L79.30 508.28 L82.86 507.92 L86.41 507.99 L89.97 508.21 L93.52 508.40 L97.08 509.06 L100.63 509.66 L104.19 509.69 L107.74 509.78 L111.30 509.44 L114.85 509.04 L118.41 507.50 L121.96 507.70 L125.52 507.79 L129.07 508.19 L132.62 508.53 L136.18 509.78 L139.73 509.88 L143.29 509.68 L146.84 509.28 L150.40 509.09 L153.95 509.38 L157.51 509.10 L161.06 508.81 L164.62 509.07 L168.17 508.98 L171.73 508.80 L175.28 508.74 L178.84 508.72 L182.40 508.69 L185.95 508.38 L189.50 508.69 L193.06 509.04 L196.62 509.02 L200.17 509.12 L203.72 509.49 L207.28 509.56 L210.84 509.36 L214.39 509.36 L217.94 509.04 L221.50 508.74 L225.06 508.53 L228.61 508.51 L232.16 508.64 L235.72 508.63 L239.28 508.96 L242.83 508.55 L246.38 508.36 L249.94 508.45 L253.50 508.39 L257.05 508.69 L260.61 508.80 L264.16 509.03 L267.71 508.63 L271.27 508.51 L274.82 498.50 L278.38 496.16 L281.94 494.89 L285.49 494.99 L289.05 494.78 L292.60 502.67 L296.16 504.45 L299.71 505.37 L303.26 503.45 L306.82 502.56 L310.38 501.76 L313.93 501.67 L317.49 501.67 L321.04 503.50 L324.60 504.88 L328.15 507.44 L331.70 506.72 L335.26 506.93 L338.81 507.02 L342.37 507.15 L345.93 507.25 L349.48 508.88 L353.04 508.83 L356.59 508.76 L360.14 508.14 L363.70 506.11 L367.25 502.25 L370.81 501.92 L374.37 502.28 L377.92 502.66 L381.48 504.81 L385.03 508.93 L388.58 509.63 L392.14 509.72 L395.69 509.73 L399.25 509.21 L402.81 508.68 L406.36 508.61 L409.92 508.42 L413.47 508.33 L417.03 509.02 L420.58 508.86 L424.13 508.66 L427.69 508.46 L431.25 508.37 L434.80 508.11 L438.36 508.14 L441.91 507.54 L445.47 507.56 L449.02 505.98 L452.57 502.72 L456.13 501.35 L459.69 500.05 L463.24 498.68 L466.80 499.77 L470.35 502.49 L473.91 504.40 L477.46 506.81 L481.01 508.56 L484.57 509.65 L488.12 509.81 L491.68 509.46 L495.24 509.42 L498.79 509.51 L502.35 504.96 L505.90 504.43 L509.45 504.07 L513.01 501.65 L516.57 500.66 L520.12 504.39 L523.68 505.21 L527.23 505.98 L530.79 508.43 L534.34 509.36 L537.90 510.00 L541.45 509.73 L545.01 509.67 L548.56 509.73 L552.12 509.27 L555.67 509.07 L559.23 509.59 L562.78 509.30 L566.34 509.29 L569.89 509.10 L573.45 508.81 L577.00 508.26 L580.56 508.14 L584.11 507.96 L587.67 508.61 L591.22 509.17 L594.78 509.24 L598.33 509.37 L601.89 508.97 L605.44 509.00 L609.00 508.96 L612.55 508.93 L616.11 508.58 L619.66 508.53 L623.22 508.16 L626.77 507.71 L630.33 507.76 L633.88 507.68 L637.44 503.49 L640.99 503.09 L644.55 503.70 L648.10 504.24 L651.66 504.86 L655.21 509.50 L658.77 509.99 L662.32 509.28 L665.88 507.49 L669.43 506.98 L672.99 506.43 L676.54 506.22 L680.10 506.68 L683.65 508.32 L687.21 508.20 L690.76 506.34 L694.32 479.64 L697.87 472.32 L701.43 468.36 L704.98 463.91 L708.54 457.24 L712.09 480.55 L715.65 485.21 L719.20 487.70 L722.76 491.53 L726.31 499.53 L729.87 501.14 L733.42 501.28 L736.98 495.14 L740.53 494.70 L744.09 493.18 L747.64 493.36 L751.20 494.43 L754.75 501.37 L758.31 502.97 L761.86 505.45 L765.42 507.08 L768.97 508.25 L772.53 508.96 L776.08 509.16 L779.64 509.35 L783.19 509.39 L786.75 509.32 L790.30 509.34 L793.86 508.81 L797.41 507.37 L800.97 507.56 L804.52 507.91 L808.08 507.60 L811.63 506.96 L815.19 508.49 L818.74 508.25 L822.30 508.02 L825.85 508.04 L829.41 508.61 L832.96 508.29 L836.52 508.36 L840.07 508.23 L843.63 508.47 L847.18 508.99 L850.74 507.86 L854.29 507.16 L857.85 507.34 L861.40 507.31 L864.96 507.18 L868.51 508.54 L872.07 509.21 L875.62 509.39 L879.18 508.57 L882.73 507.61 L886.29 508.26" fill="none" stroke="#d62fc0" stroke-width="1.0" stroke-linejoin="round" stroke-linecap="round" />
<path d="M8.20 173.32 L11.75 174.80 L15.31 176.31 L18.87 177.86 L22.42 179.49 L25.98 181.20 L29.53 182.94 L33.09 184.67 L36.64 186.35 L40.20 188.00 L43.75 189.60 L47.31 191.14 L50.86 192.62 L54.42 194.06 L57.97 195.48 L61.53 196.88 L65.08 198.28 L68.64 199.66 L72.19 201.04 L75.75 202.40 L79.30 203.73 L82.86 204.99 L86.41 206.17 L89.97 207.31 L93.52 208.42 L97.08 209.54 L100.63 210.64 L104.19 211.73 L107.74 212.81 L111.30 213.88 L114.85 214.95 L118.41 216.01 L121.96 217.08 L125.52 218.15 L129.07 219.21 L132.62 220.28 L136.18 221.35 L139.73 222.44 L143.29 223.59 L146.84 224.80 L150.40 226.08 L153.95 227.39 L157.51 228.78 L161.06 230.30 L164.62 231.97 L168.17 233.72 L171.73 235.39 L175.28 236.85 L178.84 238.06 L182.40 239.12 L185.95 240.12 L189.50 241.14 L193.06 242.20 L196.62 243.33 L200.17 244.50 L203.72 245.66 L207.28 246.74 L210.84 247.62 L214.39 248.25 L217.94 248.68 L221.50 249.05 L225.06 249.41 L228.61 249.78 L232.16 250.17 L235.72 250.57 L239.28 251.00 L242.83 251.42 L246.38 251.86 L249.94 252.32 L253.50 252.82 L257.05 253.36 L260.61 253.92 L264.16 254.49 L267.71 255.07 L271.27 255.68 L274.82 256.34 L278.38 257.03 L281.94 257.73 L285.49 258.44 L289.05 259.11 L292.60 259.72 L296.16 260.23 L299.71 260.68 L303.26 261.10 L306.82 261.51 L310.38 261.94 L313.93 262.40 L317.49 262.94 L321.04 263.58 L324.60 264.29 L328.15 265.03 L331.70 265.77 L335.26 266.49 L338.81 267.17 L342.37 267.79 L345.93 268.36 L349.48 268.90 L353.04 269.44 L356.59 269.98 L360.14 270.54 L363.70 271.12 L367.25 271.70 L370.81 272.19 L374.37 272.50 L377.92 272.72 L381.48 273.07 L385.03 273.64 L388.58 274.39 L392.14 275.30 L395.69 276.36 L399.25 277.44 L402.81 278.34 L406.36 279.03 L409.92 279.60 L413.47 280.12 L417.03 280.56 L420.58 280.82 L424.13 280.83 L427.69 280.66 L431.25 280.42 L434.80 280.15 L438.36 279.86 L441.91 279.53 L445.47 279.09 L449.02 278.48 L452.57 277.66 L456.13 276.65 L459.69 275.50 L463.24 274.27 L466.80 273.03 L470.35 271.82 L473.91 270.66 L477.46 269.53 L481.01 268.41 L484.57 267.27 L488.12 266.09 L491.68 264.87 L495.24 263.63 L498.79 262.40 L502.35 261.18 L505.90 260.05 L509.45 259.01 L513.01 258.07 L516.57 257.17 L520.12 256.29 L523.68 255.44 L527.23 254.68 L530.79 254.03 L534.34 253.46 L537.90 252.92 L541.45 252.38 L545.01 251.82 L548.56 251.21 L552.12 250.54 L555.67 249.85 L559.23 249.14 L562.78 248.42 L566.34 247.69 L569.89 246.93 L573.45 246.15 L577.00 245.36 L580.56 244.53 L584.11 243.66 L587.67 242.72 L591.22 241.72 L594.78 240.72 L598.33 239.76 L601.89 238.90 L605.44 238.11 L609.00 237.35 L612.55 236.48 L616.11 235.42 L619.66 234.16 L623.22 232.79 L626.77 231.41 L630.33 230.11 L633.88 228.91 L637.44 227.80 L640.99 226.73 L644.55 225.67 L648.10 224.62 L651.66 223.62 L655.21 222.66 L658.77 221.72 L662.32 220.78 L665.88 219.78 L669.43 218.73 L672.99 217.63 L676.54 216.49 L680.10 215.32 L683.65 214.11 L687.21 212.87 L690.76 211.62 L694.32 210.37 L697.87 209.12 L701.43 207.88 L704.98 206.66 L708.54 205.48 L712.09 204.41 L715.65 203.48 L719.20 202.66 L722.76 201.91 L726.31 201.24 L729.87 200.65 L733.42 200.13 L736.98 199.66 L740.53 199.25 L744.09 198.91 L747.64 198.63 L751.20 198.44 L754.75 198.35 L758.31 198.28 L761.86 198.09 L765.42 197.72 L768.97 197.31 L772.53 197.02 L776.08 196.85 L779.64 196.69 L783.19 196.49 L786.75 196.22 L790.30 195.91 L793.86 195.57 L797.41 195.23 L800.97 194.89 L804.52 194.55 L808.08 194.21 L811.63 193.87 L815.19 193.53 L818.74 193.19 L822.30 192.84 L825.85 192.50 L829.41 192.16 L832.96 191.83 L836.52 191.49 L840.07 191.15 L843.63 190.84 L847.18 190.57 L850.74 190.37 L854.29 190.21 L857.85 190.08 L861.40 189.98 L864.96 189.92 L868.51 189.90 L872.07 189.95 L875.62 190.10 L879.18 190.39 L882.73 190.74 L886.29 191.11" fill="none" stroke="#7c7c7c" stroke-width="1.15" stroke-linejoin="round" stroke-linecap="round" />
<path d="M8.20 196.48 L11.75 197.48 L15.31 198.48 L18.87 199.46 L22.42 200.41 L25.98 201.32 L29.53 202.21 L33.09 203.07 L36.64 203.92 L40.20 204.79 L43.75 205.76 L47.31 206.96 L50.86 208.40 L54.42 210.00 L57.97 211.69 L61.53 213.46 L65.08 215.34 L68.64 217.30 L72.19 219.29 L75.75 221.28 L79.30 223.26 L82.86 225.22 L86.41 227.16 L89.97 229.08 L93.52 231.00 L97.08 232.94 L100.63 234.95 L104.19 237.05 L107.74 239.26 L111.30 241.54 L114.85 243.83 L118.41 246.12 L121.96 248.39 L125.52 250.65 L129.07 252.90 L132.62 255.13 L136.18 257.35 L139.73 259.50 L143.29 261.58 L146.84 263.60 L150.40 265.64 L153.95 267.74 L157.51 269.97 L161.06 272.33 L164.62 274.76 L168.17 277.21 L171.73 279.65 L175.28 282.04 L178.84 284.37 L182.40 286.63 L185.95 288.87 L189.50 291.11 L193.06 293.37 L196.62 295.51 L200.17 297.26 L203.72 298.44 L207.28 299.14 L210.84 299.53 L214.39 299.72 L217.94 299.79 L221.50 299.84 L225.06 299.96 L228.61 300.19 L232.16 300.50 L235.72 300.83 L239.28 301.10 L242.83 301.29 L246.38 301.42 L249.94 301.48 L253.50 301.42 L257.05 301.23 L260.61 300.92 L264.16 300.54 L267.71 300.08 L271.27 299.52 L274.82 298.88 L278.38 298.14 L281.94 297.22 L285.49 296.08 L289.05 294.78 L292.60 293.44 L296.16 292.16 L299.71 290.99 L303.26 289.89 L306.82 288.84 L310.38 287.82 L313.93 286.84 L317.49 285.88 L321.04 284.95 L324.60 284.06 L328.15 283.22 L331.70 282.43 L335.26 281.61 L338.81 280.70 L342.37 279.64 L345.93 278.46 L349.48 277.23 L353.04 276.03 L356.59 274.91 L360.14 273.86 L363.70 272.87 L367.25 272.00 L370.81 271.27 L374.37 270.66 L377.92 270.08 L381.48 269.37 L385.03 268.47 L388.58 267.44 L392.14 266.48 L395.69 265.71 L399.25 265.11 L402.81 264.63 L406.36 264.26 L409.92 264.03 L413.47 263.85 L417.03 263.55 L420.58 262.96 L424.13 262.20 L427.69 261.50 L431.25 260.92 L434.80 260.24 L438.36 259.30 L441.91 258.15 L445.47 256.77 L449.02 255.10 L452.57 253.16 L456.13 251.07 L459.69 248.98 L463.24 246.93 L466.80 244.91 L470.35 242.99 L473.91 241.19 L477.46 239.49 L481.01 237.85 L484.57 236.25 L488.12 234.69 L491.68 233.16 L495.24 231.66 L498.79 230.22 L502.35 228.85 L505.90 227.56 L509.45 226.40 L513.01 225.49 L516.57 224.89 L520.12 224.53 L523.68 224.26 L527.23 224.01 L530.79 223.75 L534.34 223.49 L537.90 223.22 L541.45 222.96 L545.01 222.70 L548.56 222.43 L552.12 222.10 L555.67 221.67 L559.23 221.10 L562.78 220.41 L566.34 219.62 L569.89 218.73 L573.45 217.78 L577.00 216.79 L580.56 215.77 L584.11 214.74 L587.67 213.73 L591.22 212.79 L594.78 211.94 L598.33 211.14 L601.89 210.31 L605.44 209.36 L609.00 208.26 L612.55 207.02 L616.11 205.63 L619.66 204.03 L623.22 202.28 L626.77 200.54 L630.33 198.92 L633.88 197.37 L637.44 195.85 L640.99 194.35 L644.55 192.87 L648.10 191.47 L651.66 190.22 L655.21 189.20 L658.77 188.34 L662.32 187.61 L665.88 187.03 L669.43 186.61 L672.99 186.29 L676.54 185.97 L680.10 185.55 L683.65 184.99 L687.21 184.26 L690.76 183.35 L694.32 182.24 L697.87 181.03 L701.43 179.92 L704.98 179.08 L708.54 178.59 L712.09 178.33 L715.65 178.17 L719.20 178.04 L722.76 177.93 L726.31 177.82 L729.87 177.67 L733.42 177.43 L736.98 177.05 L740.53 176.57 L744.09 176.01 L747.64 175.39 L751.20 174.69 L754.75 173.95 L758.31 173.29 L761.86 172.82 L765.42 172.58 L768.97 172.54 L772.53 172.64 L776.08 172.94 L779.64 173.45 L783.19 174.06 L786.75 174.65 L790.30 175.18 L793.86 175.68 L797.41 176.19 L800.97 176.70 L804.52 177.21 L808.08 177.73 L811.63 178.24 L815.19 178.76 L818.74 179.28 L822.30 179.83 L825.85 180.44 L829.41 181.12 L832.96 181.86 L836.52 182.66 L840.07 183.51 L843.63 184.44 L847.18 185.43 L850.74 186.41 L854.29 187.33 L857.85 188.18 L861.40 188.97 L864.96 189.77 L868.51 190.61 L872.07 191.54 L875.62 192.53 L879.18 193.57 L882.73 194.60 L886.29 195.61" fill="none" stroke="#2f9f55" stroke-width="1.25" stroke-linejoin="round" stroke-linecap="round" />
<path d="M8.20 198.94 L11.75 207.79 L15.31 216.47 L18.87 224.83 L22.42 232.81 L25.98 240.41 L29.53 247.71 L33.09 254.86 L36.64 261.91 L40.20 268.80 L43.75 275.42 L47.31 281.83 L50.86 288.06 L54.42 293.98 L57.97 299.43 L61.53 304.05 L65.08 307.44 L68.64 309.52 L72.19 310.57 L75.75 310.92 L79.30 310.72 L82.86 310.12 L86.41 309.35 L89.97 308.38 L93.52 307.58 L97.08 306.58 L100.63 305.08 L104.19 303.33 L107.74 301.06 L111.30 298.98 L114.85 297.33 L118.41 295.49 L121.96 293.83 L125.52 292.51 L129.07 291.16 L132.62 290.28 L136.18 289.20 L139.73 288.10 L143.29 287.12 L146.84 286.27 L150.40 285.87 L153.95 285.85 L157.51 285.96 L161.06 286.13 L164.62 286.73 L168.17 287.53 L171.73 288.71 L175.28 290.02 L178.84 291.39 L182.40 292.74 L185.95 293.75 L189.50 295.19 L193.06 296.40 L196.62 297.63 L200.17 298.93 L203.72 299.73 L207.28 300.57 L210.84 301.36 L214.39 302.31 L217.94 303.37 L221.50 304.30 L225.06 305.08 L228.61 306.24 L232.16 307.95 L235.72 309.43 L239.28 310.61 L242.83 311.07 L246.38 311.69 L249.94 311.80 L253.50 311.48 L257.05 311.35 L260.61 311.05 L264.16 310.63 L267.71 309.90 L271.27 308.69 L274.82 306.30 L278.38 304.07 L281.94 302.01 L285.49 300.08 L289.05 298.10 L292.60 295.26 L296.16 292.34 L299.71 288.48 L303.26 283.20 L306.82 277.33 L310.38 270.83 L313.93 265.09 L317.49 259.17 L321.04 253.55 L324.60 248.59 L328.15 244.26 L331.70 240.22 L335.26 236.87 L338.81 233.81 L342.37 231.52 L345.93 230.37 L349.48 228.66 L353.04 226.95 L356.59 225.31 L360.14 223.80 L363.70 222.32 L367.25 222.29 L370.81 222.95 L374.37 224.76 L377.92 226.94 L381.48 229.48 L385.03 231.55 L388.58 233.59 L392.14 235.77 L395.69 238.18 L399.25 241.00 L402.81 244.07 L406.36 247.31 L409.92 250.11 L413.47 252.17 L417.03 254.12 L420.58 256.05 L424.13 258.10 L427.69 260.28 L431.25 262.26 L434.80 264.78 L438.36 265.71 L441.91 265.52 L445.47 264.78 L449.02 263.17 L452.57 260.78 L456.13 257.98 L459.69 254.99 L463.24 251.24 L466.80 247.72 L470.35 244.10 L473.91 240.28 L477.46 236.03 L481.01 231.55 L484.57 226.62 L488.12 221.79 L491.68 216.88 L495.24 211.98 L498.79 207.00 L502.35 201.74 L505.90 197.00 L509.45 192.34 L513.01 188.08 L516.57 184.79 L520.12 182.23 L523.68 181.20 L527.23 180.64 L530.79 180.64 L534.34 181.20 L537.90 181.27 L541.45 181.49 L545.01 182.42 L548.56 183.04 L552.12 184.06 L555.67 185.44 L559.23 186.76 L562.78 188.41 L566.34 189.26 L569.89 189.59 L573.45 190.11 L577.00 190.37 L580.56 190.82 L584.11 192.23 L587.67 193.11 L591.22 194.02 L594.78 194.23 L598.33 194.70 L601.89 194.74 L605.44 194.82 L609.00 194.91 L612.55 194.51 L616.11 193.69 L619.66 193.07 L623.22 192.17 L626.77 190.80 L630.33 189.58 L633.88 187.98 L637.44 186.56 L640.99 185.76 L644.55 185.39 L648.10 185.11 L651.66 185.66 L655.21 185.85 L658.77 186.11 L662.32 186.49 L665.88 186.29 L669.43 185.58 L672.99 185.13 L676.54 184.29 L680.10 183.57 L683.65 182.43 L687.21 180.75 L690.76 178.13 L694.32 172.90 L697.87 167.63 L701.43 163.07 L704.98 159.59 L708.54 158.86 L712.09 158.88 L715.65 158.89 L719.20 158.55 L722.76 157.30 L726.31 155.88 L729.87 153.79 L733.42 152.21 L736.98 151.21 L740.53 151.04 L744.09 149.83 L747.64 148.51 L751.20 147.60 L754.75 147.54 L758.31 147.82 L761.86 149.17 L765.42 153.23 L768.97 158.31 L772.53 163.79 L776.08 168.86 L779.64 172.02 L783.19 174.92 L786.75 177.59 L790.30 180.70 L793.86 183.97 L797.41 187.35 L800.97 191.06 L804.52 193.76 L808.08 196.43 L811.63 198.40 L815.19 201.33 L818.74 204.79 L822.30 207.85 L825.85 210.68 L829.41 213.55 L832.96 216.10 L836.52 218.34 L840.07 220.78 L843.63 222.48 L847.18 223.97 L850.74 225.45 L854.29 226.37 L857.85 226.88 L861.40 227.38 L864.96 228.19 L868.51 229.31 L872.07 230.65 L875.62 232.21 L879.18 233.72 L882.73 235.43 L886.29 237.09" fill="none" stroke="#eda51e" stroke-width="2.0" stroke-linejoin="round" stroke-linecap="round" />
<path d="M8.20 238.90 L11.75 250.48 L15.31 261.32 L18.87 271.44 L22.42 281.57 L25.98 290.83 L29.53 298.70 L33.09 305.43 L36.64 310.34 L40.20 312.76 L43.75 313.65 L47.31 313.94 L50.86 313.75 L54.42 314.23 L57.97 315.17 L61.53 314.90 L65.08 314.21 L68.64 313.63 L72.19 311.29 L75.75 309.92 L79.30 308.84 L82.86 306.69 L86.41 304.29 L89.97 301.88 L93.52 299.42 L97.08 297.75 L100.63 295.68 L104.19 293.34 L107.74 291.83 L111.30 289.60 L114.85 287.51 L118.41 285.50 L121.96 284.03 L125.52 283.65 L129.07 283.37 L132.62 283.08 L136.18 282.88 L139.73 283.14 L143.29 282.91 L146.84 283.68 L150.40 284.97 L153.95 286.60 L157.51 287.85 L161.06 288.26 L164.62 289.59 L168.17 291.44 L171.73 294.17 L175.28 296.98 L178.84 300.42 L182.40 302.61 L185.95 303.41 L189.50 304.42 L193.06 304.73 L196.62 305.31 L200.17 305.43 L203.72 305.07 L207.28 304.71 L210.84 304.41 L214.39 303.59 L217.94 303.79 L221.50 304.80 L225.06 305.09 L228.61 306.59 L232.16 308.83 L235.72 311.44 L239.28 314.55 L242.83 316.63 L246.38 318.94 L249.94 320.24 L253.50 319.43 L257.05 318.21 L260.61 317.16 L264.16 314.26 L267.71 310.18 L271.27 305.56 L274.82 298.40 L278.38 292.25 L281.94 285.74 L285.49 280.19 L289.05 276.59 L292.60 272.02 L296.16 267.46 L299.71 262.93 L303.26 256.53 L306.82 249.51 L310.38 244.14 L313.93 238.75 L317.49 232.88 L321.04 227.53 L324.60 222.20 L328.15 218.91 L331.70 215.79 L335.26 213.42 L338.81 212.52 L342.37 213.21 L345.93 215.08 L349.48 216.46 L353.04 218.38 L356.59 220.33 L360.14 223.17 L363.70 224.36 L367.25 228.23 L370.81 232.42 L374.37 237.10 L377.92 240.56 L381.48 243.20 L385.03 245.41 L388.58 247.30 L392.14 249.71 L395.69 251.80 L399.25 256.07 L402.81 257.57 L406.36 259.22 L409.92 260.34 L413.47 261.45 L417.03 262.61 L420.58 263.74 L424.13 265.40 L427.69 267.20 L431.25 269.97 L434.80 272.32 L438.36 274.39 L441.91 273.43 L445.47 270.46 L449.02 265.12 L452.57 258.42 L456.13 251.27 L459.69 243.54 L463.24 234.38 L466.80 224.99 L470.35 216.00 L473.91 206.96 L477.46 199.84 L481.01 193.55 L484.57 188.63 L488.12 185.66 L491.68 183.07 L495.24 181.05 L498.79 179.88 L502.35 177.85 L505.90 176.55 L509.45 175.96 L513.01 174.64 L516.57 174.68 L520.12 174.94 L523.68 176.43 L527.23 178.23 L530.79 180.18 L534.34 182.39 L537.90 184.70 L541.45 186.61 L545.01 189.04 L548.56 191.40 L552.12 193.12 L555.67 195.71 L559.23 197.64 L562.78 200.01 L566.34 200.09 L569.89 198.54 L573.45 197.10 L577.00 195.26 L580.56 192.92 L584.11 192.70 L587.67 192.80 L591.22 192.72 L594.78 192.09 L598.33 191.21 L601.89 191.04 L605.44 191.89 L609.00 192.26 L612.55 192.29 L616.11 192.41 L619.66 191.64 L623.22 191.28 L626.77 190.43 L630.33 189.39 L633.88 186.86 L637.44 183.62 L640.99 180.38 L644.55 178.22 L648.10 176.66 L651.66 177.04 L655.21 177.95 L658.77 179.09 L662.32 181.19 L665.88 182.05 L669.43 183.21 L672.99 185.81 L676.54 187.72 L680.10 188.76 L683.65 188.31 L687.21 184.86 L690.76 179.19 L694.32 168.08 L697.87 155.56 L701.43 145.01 L704.98 136.04 L708.54 131.83 L712.09 130.36 L715.65 129.69 L719.20 129.46 L722.76 130.02 L726.31 132.13 L729.87 137.89 L733.42 146.28 L736.98 154.40 L740.53 163.43 L744.09 166.56 L747.64 166.34 L751.20 165.44 L754.75 165.47 L758.31 165.43 L761.86 165.96 L765.42 167.80 L768.97 168.67 L772.53 170.66 L776.08 171.58 L779.64 175.41 L783.19 182.08 L786.75 188.48 L790.30 194.72 L793.86 201.73 L797.41 208.24 L800.97 213.66 L804.52 218.22 L808.08 222.05 L811.63 225.33 L815.19 227.04 L818.74 227.12 L822.30 227.00 L825.85 226.76 L829.41 226.02 L832.96 224.62 L836.52 223.05 L840.07 223.04 L843.63 223.12 L847.18 223.64 L850.74 225.48 L854.29 227.41 L857.85 228.00 L861.40 228.58 L864.96 230.74 L868.51 234.26 L872.07 238.17 L875.62 241.05 L879.18 244.07 L882.73 247.37 L886.29 249.41" fill="none" stroke="#2a3fa6" stroke-width="1.2" stroke-linejoin="round" stroke-linecap="round" />
<path d="M8.20 274.59 L11.68 289.96 L15.37 299.18 L22.42 306.56 L25.98 305.94 L29.53 307.79 L33.09 308.93 L36.64 315.29 L40.20 319.80 L43.75 320.00 L47.31 317.95 L50.86 318.03 L54.42 313.11 L57.97 312.09 L61.53 311.15 L65.08 311.56 L68.64 311.15 L72.19 309.30 L75.75 307.87 L79.30 308.20 L82.86 303.89 L86.41 299.59 L89.97 296.11 L93.52 291.80 L97.08 288.93 L100.63 289.14 L104.19 288.11 L107.74 289.34 L111.30 288.11 L114.85 286.07 L118.41 281.56 L121.96 279.51 L125.52 277.66 L129.07 278.07 L132.62 279.71 L136.18 283.81 L139.73 286.27 L143.29 285.86 L146.84 286.68 L150.40 288.11 L153.95 288.52 L157.51 289.34 L161.06 289.96 L164.62 292.01 L168.17 293.65 L171.73 298.36 L175.28 302.25 L178.84 309.63 L182.40 312.50 L185.95 311.68 L189.50 309.63 L193.06 306.76 L196.62 302.66 L200.17 301.43 L203.72 301.23 L207.28 301.84 L210.84 303.48 L214.39 304.30 L217.94 305.94 L221.50 309.02 L225.06 307.58 L228.61 309.22 L232.16 313.52 L235.72 317.01 L239.28 320.49 L242.83 324.80 L246.38 328.48 L249.94 328.07 L253.50 321.86 L257.05 315.03 L260.61 310.05 L264.16 301.25 L267.71 294.02 L271.27 291.56 L274.82 281.11 L278.38 274.75 L281.94 270.57 L285.49 266.27 L289.05 263.40 L292.60 264.02 L296.16 260.74 L299.71 256.64 L303.26 247.83 L306.82 237.17 L310.38 228.28 L313.93 221.72 L317.49 214.34 L321.04 212.70 L324.60 210.45 L328.15 212.58 L331.70 211.56 L335.26 212.58 L338.81 211.76 L342.37 216.07 L345.93 219.14 L349.48 222.42 L353.04 225.29 L356.59 229.59 L360.14 231.84 L363.70 227.95 L367.25 233.48 L370.81 239.63 L374.37 245.37 L377.92 249.06 L381.48 258.07 L385.03 257.25 L388.58 254.59 L392.14 253.98 L395.69 253.16 L399.25 255.82 L402.81 258.69 L406.36 264.84 L409.92 266.89 L413.47 269.34 L417.03 268.93 L420.58 268.52 L424.13 266.89 L427.69 268.73 L431.25 271.60 L434.80 275.29 L438.36 279.80 L441.91 278.16 L445.47 272.83 L449.02 261.75 L452.57 245.76 L456.13 227.93 L459.69 214.19 L463.24 199.84 L466.80 192.46 L470.35 191.23 L473.91 189.18 L477.46 188.16 L481.01 188.57 L484.57 185.29 L488.12 181.60 L491.68 178.52 L495.24 175.25 L498.79 172.99 L502.35 170.53 L505.90 171.15 L509.45 173.81 L513.01 173.20 L516.57 176.07 L520.12 178.52 L523.68 180.78 L527.23 181.39 L530.79 186.31 L534.34 188.77 L537.90 191.64 L541.45 192.66 L545.01 196.97 L548.56 196.97 L552.12 197.58 L555.67 200.86 L559.23 202.30 L562.78 203.52 L566.34 203.16 L569.89 198.30 L573.45 192.81 L577.00 188.15 L580.56 181.64 L584.11 183.89 L587.67 189.43 L591.22 194.14 L594.78 196.80 L598.33 200.49 L601.89 197.83 L605.44 195.98 L609.00 193.52 L612.55 191.78 L616.11 189.42 L619.66 189.72 L623.22 190.02 L626.77 189.10 L630.33 188.69 L633.88 185.41 L637.44 177.83 L640.99 170.04 L644.55 166.76 L648.10 163.48 L651.66 168.40 L655.21 178.03 L658.77 187.66 L662.32 196.48 L665.88 200.78 L669.43 197.50 L672.99 194.02 L676.54 188.28 L680.10 181.93 L683.65 177.83 L687.21 174.75 L690.76 169.43 L694.32 151.07 L697.87 129.85 L701.43 112.11 L704.98 95.32 L708.54 92.95 L712.09 109.25 L715.65 129.45 L719.20 146.57 L722.76 163.37 L726.31 168.40 L729.87 165.74 L733.42 166.15 L736.98 166.97 L740.53 172.50 L744.09 170.25 L747.64 169.02 L751.20 165.33 L754.75 165.33 L758.31 159.39 L761.86 161.64 L765.42 167.17 L768.97 171.27 L772.53 175.57 L776.08 180.29 L779.64 186.02 L783.19 196.39 L786.75 205.31 L790.30 212.19 L793.86 220.30 L797.41 227.58 L800.97 229.43 L804.52 230.45 L808.08 230.86 L811.63 229.84 L815.19 226.76 L818.74 224.51 L822.30 222.87 L825.85 222.46 L829.41 222.87 L832.96 223.07 L836.52 221.23 L840.07 223.69 L843.63 223.28 L847.18 222.05 L850.74 224.92 L854.29 231.07 L857.85 230.45 L861.40 232.09 L864.96 236.80 L868.51 241.11 L872.07 243.98 L875.62 249.92 L879.18 254.63 L882.73 258.32 L886.29 258.73" fill="none" stroke="#d62fc0" stroke-width="1.15" stroke-linejoin="round" stroke-linecap="round" />
<path d="M11.75 305.33V323.36M22.42 298.16V304.30M33.09 309.43V329.51M40.20 318.65V332.99M43.75 301.23V334.02M61.53 298.16V307.38M72.19 301.23V314.55M79.30 304.30V318.65M82.86 286.89V307.38M89.97 282.79V298.16M93.52 281.76V293.03M104.19 277.66V288.93M111.30 277.66V287.91M114.85 278.69V286.89M118.41 252.05V286.89M143.29 280.74V285.86M153.95 287.91V299.18M161.06 282.79V289.96M175.28 309.43V324.80M182.40 310.45V320.70M185.95 299.18V317.62M193.06 295.08V304.30M203.72 298.16V310.45M225.06 298.16V314.55M239.28 327.87V340.16M242.83 319.67V340.16M249.94 320.70V331.97M253.50 299.88V321.39M257.05 293.73V306.02M260.61 289.63V299.88M264.16 278.36V293.73M274.82 228.16V285.53M285.49 265.04V277.34M292.60 247.62V274.26M303.26 220.98V247.62M310.38 198.44V217.91M317.49 201.52V219.96M324.60 208.69V215.86M331.70 192.30V224.06M338.81 204.59V217.91M349.48 224.06V236.35M363.70 203.57V238.40M381.48 253.77V262.99M388.58 240.45V248.65M395.69 253.77V262.99M402.81 262.99V278.36M409.92 267.09V272.21M413.47 268.11V279.39M417.03 261.97V271.19M420.58 251.72V269.14M438.36 278.36V290.04M441.91 258.89V281.43M445.47 249.67V261.97M449.02 220.94V250.66M452.57 200.45V226.07M456.13 194.30V211.72M463.24 172.79V197.38M473.91 180.98V200.45M481.01 170.74V187.13M484.57 172.79V185.08M491.68 165.61V182.01M498.79 168.69V179.96M502.35 140.00V173.81M513.01 150.25V174.84M520.12 171.76V199.43M527.23 185.08V201.48M537.90 184.06V194.30M548.56 190.20V207.62M566.34 188.40V207.87M569.89 174.06V187.38M580.56 178.16V187.38M594.78 194.55V203.77M601.89 186.35V201.72M609.00 183.28V194.55M626.77 179.67V191.97M633.88 169.43V183.77M637.44 145.86V171.48M648.10 163.28V175.57M665.88 175.57V206.31M669.43 173.52V192.99M676.54 174.55V186.84M683.65 169.43V181.72M687.21 158.16V179.67M690.76 146.89V171.48M694.32 64.34V149.39M697.87 72.54V98.16M704.98 66.39V89.96M719.20 162.25V178.65M722.76 159.18V172.50M729.87 146.89V168.40M744.09 149.96V186.84M747.64 137.66V163.28M758.31 161.23V173.52M761.86 157.13V172.50M776.08 180.70V194.02M786.75 223.28V235.57M790.30 227.38V234.55M793.86 217.13V229.43M804.52 224.30V237.62M808.08 219.18V235.57M811.63 219.18V232.50M815.19 216.11V225.33M829.41 219.18V229.43M832.96 218.16V224.30M836.52 200.74V220.20M843.63 225.33V232.50M847.18 207.91V224.30M857.85 229.43V241.72M879.18 257.70V270.41M882.73 257.09V263.24M886.29 257.09V263.24" stroke="#e0201a" stroke-width="1.25" fill="none"/>
<path d="M8.20 286.89V311.48M15.31 292.01V309.43M18.87 292.01V313.52M25.98 302.25V313.52M29.53 304.30V319.67M36.64 315.57V342.21M47.31 298.16V312.50M50.86 299.18V314.55M54.42 303.28V317.62M57.97 309.43V318.65M65.08 300.82V311.48M68.64 301.23V312.50M75.75 296.11V310.45M86.41 277.66V290.98M97.08 278.69V296.11M100.63 286.89V294.06M107.74 280.74V294.06M121.96 258.20V275.61M125.52 264.34V284.84M129.07 273.57V287.91M132.62 278.69V290.98M136.18 281.76V289.96M139.73 280.74V294.06M146.84 280.74V288.93M150.40 281.76V298.16M157.51 285.86V297.13M164.62 286.89V301.23M168.17 295.08V308.40M171.73 306.35V314.55M178.84 312.50V324.80M189.50 296.11V308.40M196.62 287.91V303.28M200.17 299.18V309.43M207.28 292.01V309.43M210.84 298.16V309.43M214.39 298.16V306.35M217.94 305.33V316.60M221.50 309.43V321.72M228.61 296.11V313.52M232.16 311.48V327.87M235.72 320.70V334.02M246.38 319.67V331.97M267.71 280.41V291.68M271.27 278.36V289.63M278.38 240.45V269.14M281.94 256.84V280.41M289.05 260.94V276.31M296.16 238.40V253.77M299.71 231.23V250.70M306.82 214.84V228.16M313.93 201.52V222.01M321.04 204.59V217.91M328.15 201.52V218.93M335.26 206.64V219.96M342.37 210.74V232.25M345.93 218.93V235.33M353.04 219.96V236.35M356.59 223.03V234.30M360.14 229.18V244.55M367.25 210.74V254.80M370.81 255.82V269.14M374.37 252.75V262.99M377.92 253.77V262.99M385.03 245.57V254.80M392.14 247.62V258.89M399.25 260.94V270.16M406.36 262.99V278.36M424.13 256.84V269.14M427.69 262.99V278.36M431.25 276.31V285.53M434.80 281.43V287.58M459.69 170.74V194.30M466.80 175.86V192.25M470.35 190.20V200.45M477.46 175.86V198.40M488.12 173.81V184.06M495.24 160.49V177.91M505.90 159.47V188.16M509.45 157.42V184.06M516.57 166.64V197.38M523.68 171.76V196.35M530.79 183.03V194.30M534.34 186.11V198.40M541.45 190.20V205.57M545.01 193.28V208.65M552.12 191.23V205.57M555.67 198.40V206.60M559.23 202.50V210.70M562.78 201.48V215.82M573.45 165.86V181.23M577.00 170.98V186.35M584.11 185.33V201.72M587.67 179.18V203.77M591.22 191.48V202.75M598.33 187.38V201.72M605.44 184.30V195.57M612.55 184.80V190.94M616.11 183.77V190.94M619.66 177.62V190.94M623.22 186.84V199.14M630.33 179.67V188.89M640.99 149.96V164.30M644.55 147.91V170.45M651.66 168.40V198.11M655.21 192.99V206.31M658.77 197.09V205.29M662.32 199.14V212.46M672.99 170.45V182.75M680.10 173.52V181.72M701.43 69.47V92.01M708.54 78.69V146.31M712.09 143.81V166.35M715.65 161.23V176.60M726.31 161.23V179.67M733.42 150.98V186.84M736.98 130.49V173.52M740.53 175.57V197.09M751.20 140.74V163.28M754.75 159.18V175.57M765.42 163.28V175.57M768.97 171.48V181.72M772.53 179.67V195.04M779.64 183.77V198.11M783.19 195.61V226.35M797.41 225.33V242.75M800.97 229.43V236.60M818.74 213.03V224.30M822.30 213.03V226.35M825.85 216.11V231.48M840.07 214.06V234.55M850.74 214.06V235.57M854.29 232.50V246.84M861.40 221.23V237.62M864.96 228.40V241.72M868.51 237.62V257.09M872.07 250.94V260.16M875.62 250.94V261.19" stroke="#1f5bd0" stroke-width="1.25" fill="none"/>
<path d="M10.25 309.43h3.0V320.70h-3.0zM20.92 299.18h3.0V303.28h-3.0zM31.59 313.11h3.0V321.31h-3.0zM38.70 321.72h3.0V331.97h-3.0zM42.25 308.40h3.0V325.82h-3.0zM60.03 303.69h3.0V306.97h-3.0zM70.69 304.30h3.0V311.48h-3.0zM77.80 305.33h3.0V310.45h-3.0zM81.36 288.93h3.0V306.35h-3.0zM88.47 286.89h3.0V296.11h-3.0zM92.02 287.91h3.0V292.01h-3.0zM102.69 284.84h3.0V287.91h-3.0zM109.80 281.76h3.0V286.89h-3.0zM113.35 280.74h3.0V285.86h-3.0zM116.91 267.42h3.0V285.86h-3.0zM141.79 281.76h3.0V284.84h-3.0zM152.45 289.96h3.0V298.16h-3.0zM159.56 284.84h3.0V288.93h-3.0zM173.78 310.45h3.0V318.65h-3.0zM180.90 312.50h3.0V316.60h-3.0zM184.45 300.20h3.0V313.52h-3.0zM191.56 296.11h3.0V302.25h-3.0zM202.22 299.18h3.0V307.38h-3.0zM223.56 299.18h3.0V313.52h-3.0zM237.78 331.97h3.0V335.04h-3.0zM241.33 320.70h3.0V336.07h-3.0zM248.44 324.80h3.0V330.94h-3.0zM252.00 300.90h3.0V319.34h-3.0zM255.55 297.83h3.0V300.90h-3.0zM259.11 295.78h3.0V298.85h-3.0zM262.66 286.97h3.0V289.63h-3.0zM273.32 245.57h3.0V284.51h-3.0zM283.99 267.09h3.0V269.14h-3.0zM291.10 248.65h3.0V273.24h-3.0zM301.76 223.03h3.0V242.50h-3.0zM308.88 204.18h3.0V213.81h-3.0zM315.99 208.69h3.0V215.86h-3.0zM323.10 209.71h3.0V211.76h-3.0zM330.20 209.71h3.0V213.81h-3.0zM337.31 210.74h3.0V212.79h-3.0zM347.98 226.11h3.0V234.30h-3.0zM362.20 210.74h3.0V237.38h-3.0zM379.98 255.82h3.0V257.87h-3.0zM387.08 245.57h3.0V247.62h-3.0zM394.19 256.84h3.0V258.89h-3.0zM401.31 264.02h3.0V274.26h-3.0zM408.42 268.11h3.0V271.19h-3.0zM411.97 269.14h3.0V272.21h-3.0zM415.53 267.09h3.0V270.16h-3.0zM419.08 261.97h3.0V268.11h-3.0zM436.86 284.51h3.0V286.56h-3.0zM440.41 259.92h3.0V280.41h-3.0zM443.97 250.70h3.0V260.94h-3.0zM447.52 228.11h3.0V248.61h-3.0zM451.07 205.57h3.0V221.97h-3.0zM454.63 195.33h3.0V205.57h-3.0zM461.74 178.93h3.0V191.23h-3.0zM472.41 185.08h3.0V194.30h-3.0zM479.51 180.98h3.0V186.11h-3.0zM483.07 174.84h3.0V179.96h-3.0zM490.18 169.71h3.0V180.98h-3.0zM497.29 169.71h3.0V172.79h-3.0zM500.85 162.54h3.0V172.79h-3.0zM511.51 166.64h3.0V173.81h-3.0zM518.62 174.84h3.0V186.11h-3.0zM525.73 186.11h3.0V200.45h-3.0zM536.40 189.18h3.0V191.23h-3.0zM547.06 191.23h3.0V206.60h-3.0zM564.84 189.43h3.0V202.75h-3.0zM568.39 175.08h3.0V184.30h-3.0zM579.06 181.23h3.0V184.30h-3.0zM593.28 197.62h3.0V201.72h-3.0zM600.39 187.38h3.0V199.67h-3.0zM607.50 189.43h3.0V193.52h-3.0zM625.27 184.80h3.0V189.92h-3.0zM632.38 171.48h3.0V182.75h-3.0zM635.94 150.98h3.0V170.45h-3.0zM646.60 170.45h3.0V174.55h-3.0zM664.38 191.97h3.0V205.29h-3.0zM667.93 179.67h3.0V191.97h-3.0zM675.04 175.57h3.0V181.72h-3.0zM682.15 171.48h3.0V179.67h-3.0zM685.71 164.30h3.0V178.65h-3.0zM689.26 155.08h3.0V158.16h-3.0zM692.82 83.81h3.0V148.36h-3.0zM696.37 74.59h3.0V89.96h-3.0zM703.48 80.33h3.0V81.35h-3.0zM717.70 168.40h3.0V177.62h-3.0zM721.26 164.30h3.0V171.48h-3.0zM728.37 152.01h3.0V167.38h-3.0zM742.59 157.13h3.0V185.82h-3.0zM746.14 145.86h3.0V155.08h-3.0zM756.81 162.25h3.0V165.33h-3.0zM760.36 168.40h3.0V171.48h-3.0zM774.58 185.82h3.0V191.97h-3.0zM785.25 224.30h3.0V226.35h-3.0zM788.80 228.40h3.0V231.48h-3.0zM792.36 226.35h3.0V228.40h-3.0zM803.02 229.43h3.0V230.66h-3.0zM806.58 230.45h3.0V233.52h-3.0zM810.13 221.23h3.0V231.48h-3.0zM813.69 218.16h3.0V220.20h-3.0zM827.91 223.28h3.0V228.40h-3.0zM831.46 219.18h3.0V221.23h-3.0zM835.02 214.06h3.0V219.18h-3.0zM842.13 226.35h3.0V231.48h-3.0zM845.68 217.13h3.0V222.25h-3.0zM856.35 230.45h3.0V240.70h-3.0zM877.68 258.11h3.0V263.85h-3.0zM881.23 259.14h3.0V260.57h-3.0zM884.79 257.09h3.0V262.21h-3.0z" fill="#e0201a"/>
<path d="M6.70 298.16h3.0V310.45h-3.0zM13.81 298.16h3.0V307.38h-3.0zM17.37 298.16h3.0V306.35h-3.0zM24.48 303.28h3.0V307.38h-3.0zM28.03 310.45h3.0V318.65h-3.0zM35.14 315.57h3.0V338.11h-3.0zM45.81 300.20h3.0V308.40h-3.0zM49.36 302.25h3.0V313.52h-3.0zM52.92 308.40h3.0V313.52h-3.0zM56.47 311.48h3.0V316.60h-3.0zM63.58 303.28h3.0V310.45h-3.0zM67.14 306.35h3.0V311.48h-3.0zM74.25 305.33h3.0V309.43h-3.0zM84.91 286.89h3.0V289.96h-3.0zM95.58 281.76h3.0V290.98h-3.0zM99.13 287.91h3.0V289.96h-3.0zM106.24 287.91h3.0V293.03h-3.0zM120.46 260.25h3.0V274.59h-3.0zM124.02 266.39h3.0V283.81h-3.0zM127.57 277.66h3.0V283.81h-3.0zM131.12 280.74h3.0V288.93h-3.0zM134.68 283.81h3.0V287.91h-3.0zM138.23 284.84h3.0V286.89h-3.0zM145.34 282.79h3.0V287.91h-3.0zM148.90 287.91h3.0V296.11h-3.0zM156.01 288.93h3.0V290.98h-3.0zM163.12 287.91h3.0V298.16h-3.0zM166.67 297.13h3.0V304.30h-3.0zM170.23 308.40h3.0V313.52h-3.0zM177.34 317.62h3.0V321.72h-3.0zM188.00 297.13h3.0V303.28h-3.0zM195.12 297.13h3.0V301.23h-3.0zM198.67 300.20h3.0V306.35h-3.0zM205.78 298.16h3.0V306.35h-3.0zM209.34 299.18h3.0V304.30h-3.0zM212.89 299.18h3.0V305.33h-3.0zM216.44 308.40h3.0V314.55h-3.0zM220.00 311.48h3.0V314.55h-3.0zM227.11 307.38h3.0V312.50h-3.0zM230.66 312.50h3.0V326.84h-3.0zM234.22 321.72h3.0V331.97h-3.0zM244.88 320.70h3.0V330.94h-3.0zM266.21 285.53h3.0V288.61h-3.0zM269.77 284.51h3.0V288.61h-3.0zM276.88 244.55h3.0V264.02h-3.0zM280.44 257.87h3.0V266.07h-3.0zM287.55 261.97h3.0V274.26h-3.0zM294.66 245.57h3.0V247.62h-3.0zM298.21 240.45h3.0V245.57h-3.0zM305.32 217.91h3.0V220.98h-3.0zM312.43 203.57h3.0V214.84h-3.0zM319.54 208.69h3.0V214.84h-3.0zM326.65 210.74h3.0V214.84h-3.0zM333.76 208.69h3.0V213.81h-3.0zM340.87 211.76h3.0V231.23h-3.0zM344.43 226.11h3.0V230.20h-3.0zM351.54 226.11h3.0V228.16h-3.0zM355.09 227.13h3.0V232.25h-3.0zM358.64 237.38h3.0V242.50h-3.0zM365.75 210.74h3.0V253.77h-3.0zM369.31 256.84h3.0V258.89h-3.0zM372.87 257.87h3.0V260.94h-3.0zM376.42 257.87h3.0V260.94h-3.0zM383.53 247.62h3.0V249.67h-3.0zM390.64 248.65h3.0V257.87h-3.0zM397.75 261.97h3.0V269.14h-3.0zM404.86 264.02h3.0V276.31h-3.0zM422.63 265.04h3.0V268.11h-3.0zM426.19 264.02h3.0V277.34h-3.0zM429.75 278.36h3.0V283.48h-3.0zM433.30 282.46h3.0V285.53h-3.0zM458.19 186.11h3.0V191.23h-3.0zM465.30 176.89h3.0V191.23h-3.0zM468.85 191.23h3.0V199.43h-3.0zM475.96 179.96h3.0V186.11h-3.0zM486.62 174.84h3.0V180.98h-3.0zM493.74 164.59h3.0V169.71h-3.0zM504.40 159.47h3.0V184.06h-3.0zM507.95 176.89h3.0V183.03h-3.0zM515.07 166.64h3.0V184.06h-3.0zM522.18 174.84h3.0V195.33h-3.0zM529.29 187.13h3.0V191.23h-3.0zM532.84 189.18h3.0V196.35h-3.0zM539.95 192.25h3.0V200.45h-3.0zM543.51 199.43h3.0V207.62h-3.0zM550.62 191.23h3.0V199.43h-3.0zM554.17 202.50h3.0V205.57h-3.0zM557.73 204.55h3.0V207.62h-3.0zM561.28 209.67h3.0V213.77h-3.0zM571.95 175.08h3.0V178.16h-3.0zM575.50 172.01h3.0V184.30h-3.0zM582.61 186.35h3.0V200.70h-3.0zM586.17 180.20h3.0V202.75h-3.0zM589.72 198.65h3.0V201.72h-3.0zM596.83 190.45h3.0V199.67h-3.0zM603.94 185.33h3.0V193.52h-3.0zM611.05 185.82h3.0V188.89h-3.0zM614.61 184.80h3.0V187.87h-3.0zM618.16 182.75h3.0V188.89h-3.0zM621.72 188.89h3.0V195.04h-3.0zM628.83 181.72h3.0V186.84h-3.0zM639.49 150.98h3.0V156.11h-3.0zM643.05 157.13h3.0V168.40h-3.0zM650.16 169.43h3.0V196.07h-3.0zM653.71 196.07h3.0V199.14h-3.0zM657.27 198.11h3.0V204.26h-3.0zM660.82 200.16h3.0V212.46h-3.0zM671.49 171.48h3.0V181.72h-3.0zM678.60 174.55h3.0V180.70h-3.0zM699.93 80.74h3.0V82.79h-3.0zM707.04 78.69h3.0V143.24h-3.0zM710.59 144.84h3.0V165.33h-3.0zM714.15 162.25h3.0V175.57h-3.0zM724.81 164.30h3.0V168.40h-3.0zM731.92 152.01h3.0V177.62h-3.0zM735.48 156.11h3.0V172.50h-3.0zM739.03 176.60h3.0V191.97h-3.0zM749.70 148.93h3.0V159.18h-3.0zM753.25 161.23h3.0V172.50h-3.0zM763.92 165.33h3.0V173.52h-3.0zM767.47 174.55h3.0V179.67h-3.0zM771.03 181.72h3.0V194.02h-3.0zM778.14 184.80h3.0V197.09h-3.0zM781.69 200.74h3.0V225.33h-3.0zM795.91 225.33h3.0V233.52h-3.0zM799.47 231.48h3.0V234.55h-3.0zM817.24 213.03h3.0V223.28h-3.0zM820.80 218.16h3.0V221.23h-3.0zM824.35 217.13h3.0V228.40h-3.0zM838.57 214.06h3.0V233.52h-3.0zM849.24 215.08h3.0V233.52h-3.0zM852.79 233.52h3.0V244.80h-3.0zM859.90 227.38h3.0V234.55h-3.0zM863.46 234.55h3.0V240.70h-3.0zM867.01 238.65h3.0V255.04h-3.0zM870.57 251.97h3.0V259.14h-3.0zM874.12 252.99h3.0V260.16h-3.0z" fill="#1f5bd0"/>
<line x1="920.10" y1="75.50" x2="920.10" y2="534.20" stroke="#8e8e8e" stroke-width="1.1" />
<line x1="920.10" y1="347.00" x2="926.60" y2="347.00" stroke="#777" stroke-width="1" />
<text x="928.60" y="350.80" font-size="14" fill="#4c5058" stroke="#4c5058" stroke-width="0.2" font-family="'Liberation Sans','NanumGothic','Noto Sans CJK KR',sans-serif" textLength="33.0" lengthAdjust="spacingAndGlyphs" >10,000</text>
<line x1="920.10" y1="310.50" x2="926.60" y2="310.50" stroke="#777" stroke-width="1" />
<text x="928.60" y="314.30" font-size="14" fill="#4c5058" stroke="#4c5058" stroke-width="0.2" font-family="'Liberation Sans','NanumGothic','Noto Sans CJK KR',sans-serif" textLength="33.0" lengthAdjust="spacingAndGlyphs" >11,000</text>
<line x1="920.10" y1="274.00" x2="926.60" y2="274.00" stroke="#777" stroke-width="1" />
<text x="928.60" y="277.80" font-size="14" fill="#4c5058" stroke="#4c5058" stroke-width="0.2" font-family="'Liberation Sans','NanumGothic','Noto Sans CJK KR',sans-serif" textLength="33.0" lengthAdjust="spacingAndGlyphs" >12,000</text>
<line x1="920.10" y1="237.50" x2="926.60" y2="237.50" stroke="#777" stroke-width="1" />
<text x="928.60" y="241.30" font-size="14" fill="#4c5058" stroke="#4c5058" stroke-width="0.2" font-family="'Liberation Sans','NanumGothic','Noto Sans CJK KR',sans-serif" textLength="33.0" lengthAdjust="spacingAndGlyphs" >13,000</text>
<line x1="920.10" y1="201.00" x2="926.60" y2="201.00" stroke="#777" stroke-width="1" />
<text x="928.60" y="204.80" font-size="14" fill="#4c5058" stroke="#4c5058" stroke-width="0.2" font-family="'Liberation Sans','NanumGothic','Noto Sans CJK KR',sans-serif" textLength="33.0" lengthAdjust="spacingAndGlyphs" >14,000</text>
<line x1="920.10" y1="164.50" x2="926.60" y2="164.50" stroke="#777" stroke-width="1" />
<text x="928.60" y="168.30" font-size="14" fill="#4c5058" stroke="#4c5058" stroke-width="0.2" font-family="'Liberation Sans','NanumGothic','Noto Sans CJK KR',sans-serif" textLength="33.0" lengthAdjust="spacingAndGlyphs" >15,000</text>
<line x1="920.10" y1="128.00" x2="926.60" y2="128.00" stroke="#777" stroke-width="1" />
<text x="928.60" y="131.80" font-size="14" fill="#4c5058" stroke="#4c5058" stroke-width="0.2" font-family="'Liberation Sans','NanumGothic','Noto Sans CJK KR',sans-serif" textLength="33.0" lengthAdjust="spacingAndGlyphs" >16,000</text>
<line x1="920.10" y1="91.50" x2="926.60" y2="91.50" stroke="#777" stroke-width="1" />
<text x="928.60" y="95.30" font-size="14" fill="#4c5058" stroke="#4c5058" stroke-width="0.2" font-family="'Liberation Sans','NanumGothic','Noto Sans CJK KR',sans-serif" textLength="33.0" lengthAdjust="spacingAndGlyphs" >17,000</text>
<line x1="920.10" y1="354.30" x2="923.00" y2="354.30" stroke="#8a8a8a" stroke-width="0.9" />
<line x1="920.10" y1="339.70" x2="923.00" y2="339.70" stroke="#8a8a8a" stroke-width="0.9" />
<line x1="920.10" y1="332.40" x2="923.00" y2="332.40" stroke="#8a8a8a" stroke-width="0.9" />
<line x1="920.10" y1="325.10" x2="923.00" y2="325.10" stroke="#8a8a8a" stroke-width="0.9" />
<line x1="920.10" y1="317.80" x2="923.00" y2="317.80" stroke="#8a8a8a" stroke-width="0.9" />
<line x1="920.10" y1="303.20" x2="923.00" y2="303.20" stroke="#8a8a8a" stroke-width="0.9" />
<line x1="920.10" y1="295.90" x2="923.00" y2="295.90" stroke="#8a8a8a" stroke-width="0.9" />
<line x1="920.10" y1="288.60" x2="923.00" y2="288.60" stroke="#8a8a8a" stroke-width="0.9" />
<line x1="920.10" y1="281.30" x2="923.00" y2="281.30" stroke="#8a8a8a" stroke-width="0.9" />
<line x1="920.10" y1="266.70" x2="923.00" y2="266.70" stroke="#8a8a8a" stroke-width="0.9" />
<line x1="920.10" y1="259.40" x2="923.00" y2="259.40" stroke="#8a8a8a" stroke-width="0.9" />
<line x1="920.10" y1="252.10" x2="923.00" y2="252.10" stroke="#8a8a8a" stroke-width="0.9" />
<line x1="920.10" y1="244.80" x2="923.00" y2="244.80" stroke="#8a8a8a" stroke-width="0.9" />
<line x1="920.10" y1="230.20" x2="923.00" y2="230.20" stroke="#8a8a8a" stroke-width="0.9" />
<line x1="920.10" y1="222.90" x2="923.00" y2="222.90" stroke="#8a8a8a" stroke-width="0.9" />
<line x1="920.10" y1="215.60" x2="923.00" y2="215.60" stroke="#8a8a8a" stroke-width="0.9" />
<line x1="920.10" y1="208.30" x2="923.00" y2="208.30" stroke="#8a8a8a" stroke-width="0.9" />
<line x1="920.10" y1="193.70" x2="923.00" y2="193.70" stroke="#8a8a8a" stroke-width="0.9" />
<line x1="920.10" y1="186.40" x2="923.00" y2="186.40" stroke="#8a8a8a" stroke-width="0.9" />
<line x1="920.10" y1="179.10" x2="923.00" y2="179.10" stroke="#8a8a8a" stroke-width="0.9" />
<line x1="920.10" y1="171.80" x2="923.00" y2="171.80" stroke="#8a8a8a" stroke-width="0.9" />
<line x1="920.10" y1="157.20" x2="923.00" y2="157.20" stroke="#8a8a8a" stroke-width="0.9" />
<line x1="920.10" y1="149.90" x2="923.00" y2="149.90" stroke="#8a8a8a" stroke-width="0.9" />
<line x1="920.10" y1="142.60" x2="923.00" y2="142.60" stroke="#8a8a8a" stroke-width="0.9" />
<line x1="920.10" y1="135.30" x2="923.00" y2="135.30" stroke="#8a8a8a" stroke-width="0.9" />
<line x1="920.10" y1="120.70" x2="923.00" y2="120.70" stroke="#8a8a8a" stroke-width="0.9" />
<line x1="920.10" y1="113.40" x2="923.00" y2="113.40" stroke="#8a8a8a" stroke-width="0.9" />
<line x1="920.10" y1="106.10" x2="923.00" y2="106.10" stroke="#8a8a8a" stroke-width="0.9" />
<line x1="920.10" y1="98.80" x2="923.00" y2="98.80" stroke="#8a8a8a" stroke-width="0.9" />
<line x1="920.10" y1="84.20" x2="923.00" y2="84.20" stroke="#8a8a8a" stroke-width="0.9" />
<line x1="920.10" y1="76.90" x2="923.00" y2="76.90" stroke="#8a8a8a" stroke-width="0.9" />
<text x="921.00" y="60.40" font-size="14" fill="#c9403c" stroke="#c9403c" stroke-width="0.2" font-family="'Liberation Sans','NanumGothic','Noto Sans CJK KR',sans-serif" textLength="47.6" lengthAdjust="spacingAndGlyphs" >LC:22,76</text>
<text x="921.00" y="72.50" font-size="14" fill="#3a6cc8" stroke="#3a6cc8" stroke-width="0.2" font-family="'Liberation Sans','NanumGothic','Noto Sans CJK KR',sans-serif" textLength="54.8" lengthAdjust="spacingAndGlyphs" >HC:-29,68</text>
<rect x="924.20" y="262.40" width="58.00" height="10.80" fill="#dbe5f1" />
<rect x="924.20" y="250.00" width="58.00" height="12.50" fill="#e01f14" />
<text x="928.20" y="261.00" font-size="14" fill="#ffffff" stroke="#ffffff" stroke-width="0.2" font-family="'Liberation Sans','NanumGothic','Noto Sans CJK KR',sans-serif" textLength="33.0" lengthAdjust="spacingAndGlyphs" >12,460</text>
<text x="928.20" y="272.80" font-size="14" fill="#e0261c" stroke="#e0261c" stroke-width="0.2" font-family="'Liberation Sans','NanumGothic','Noto Sans CJK KR',sans-serif" textLength="30.4" lengthAdjust="spacingAndGlyphs" >1,05%</text>
<line x1="920.10" y1="492.56" x2="925.60" y2="492.56" stroke="#777" stroke-width="1" />
<text x="928.40" y="496.76" font-size="14" fill="#4c5058" stroke="#4c5058" stroke-width="0.2" font-family="'Liberation Sans','NanumGothic','Noto Sans CJK KR',sans-serif" textLength="35.0" lengthAdjust="spacingAndGlyphs" >2,500K</text>
<line x1="920.10" y1="470.32" x2="925.60" y2="470.32" stroke="#777" stroke-width="1" />
<text x="928.40" y="474.52" font-size="14" fill="#4c5058" stroke="#4c5058" stroke-width="0.2" font-family="'Liberation Sans','NanumGothic','Noto Sans CJK KR',sans-serif" textLength="35.0" lengthAdjust="spacingAndGlyphs" >5,000K</text>
<line x1="920.10" y1="448.08" x2="925.60" y2="448.08" stroke="#777" stroke-width="1" />
<text x="928.40" y="452.28" font-size="14" fill="#4c5058" stroke="#4c5058" stroke-width="0.2" font-family="'Liberation Sans','NanumGothic','Noto Sans CJK KR',sans-serif" textLength="35.0" lengthAdjust="spacingAndGlyphs" >7,500K</text>
<line x1="920.10" y1="425.84" x2="925.60" y2="425.84" stroke="#777" stroke-width="1" />
<text x="928.40" y="430.04" font-size="14" fill="#4c5058" stroke="#4c5058" stroke-width="0.2" font-family="'Liberation Sans','NanumGothic','Noto Sans CJK KR',sans-serif" textLength="41.4" lengthAdjust="spacingAndGlyphs" >10,000K</text>
<line x1="920.10" y1="403.60" x2="925.60" y2="403.60" stroke="#777" stroke-width="1" />
<text x="928.40" y="407.80" font-size="14" fill="#4c5058" stroke="#4c5058" stroke-width="0.2" font-family="'Liberation Sans','NanumGothic','Noto Sans CJK KR',sans-serif" textLength="41.4" lengthAdjust="spacingAndGlyphs" >12,500K</text>
<line x1="920.10" y1="381.36" x2="925.60" y2="381.36" stroke="#777" stroke-width="1" />
<text x="928.40" y="385.56" font-size="14" fill="#4c5058" stroke="#4c5058" stroke-width="0.2" font-family="'Liberation Sans','NanumGothic','Noto Sans CJK KR',sans-serif" textLength="41.4" lengthAdjust="spacingAndGlyphs" >15,000K</text>
<line x1="920.10" y1="503.68" x2="922.80" y2="503.68" stroke="#8a8a8a" stroke-width="0.9" />
<line x1="920.10" y1="481.44" x2="922.80" y2="481.44" stroke="#8a8a8a" stroke-width="0.9" />
<line x1="920.10" y1="459.20" x2="922.80" y2="459.20" stroke="#8a8a8a" stroke-width="0.9" />
<line x1="920.10" y1="436.96" x2="922.80" y2="436.96" stroke="#8a8a8a" stroke-width="0.9" />
<line x1="920.10" y1="414.72" x2="922.80" y2="414.72" stroke="#8a8a8a" stroke-width="0.9" />
<line x1="920.10" y1="392.48" x2="922.80" y2="392.48" stroke="#8a8a8a" stroke-width="0.9" />
<line x1="920.10" y1="370.24" x2="922.80" y2="370.24" stroke="#8a8a8a" stroke-width="0.9" />
<rect x="924.20" y="502.60" width="58.00" height="12.00" fill="#dbe5f1" />
<rect x="924.20" y="490.40" width="58.00" height="12.40" fill="#1a56c8" />
<text x="928.00" y="501.40" font-size="14" fill="#ffffff" stroke="#ffffff" stroke-width="0.2" font-family="'Liberation Sans','NanumGothic','Noto Sans CJK KR',sans-serif" textLength="27.4" lengthAdjust="spacingAndGlyphs" >3,927</text>
<text x="928.00" y="513.40" font-size="14" fill="#2b62cc" stroke="#2b62cc" stroke-width="0.2" font-family="'Liberation Sans','NanumGothic','Noto Sans CJK KR',sans-serif" textLength="30.4" lengthAdjust="spacingAndGlyphs" >1,24%</text>
<rect x="974.60" y="365.20" width="7.40" height="6.60" fill="#4a4a4a" />
<path d="M976.4 366.8 l3.8 3.4 M980.2 366.8 l-3.8 3.4" stroke="#ddd" stroke-width="0.9"/>
<line x1="6.50" y1="360.90" x2="984.80" y2="360.90" stroke="#9a9a9a" stroke-width="1.4" />
<line x1="6.50" y1="516.20" x2="984.80" y2="516.20" stroke="#9a9a9a" stroke-width="1.1" />
<text x="8.20" y="529.60" font-size="14" fill="#4c5058" stroke="#4c5058" stroke-width="0.2" font-family="'Liberation Sans','NanumGothic','Noto Sans CJK KR',sans-serif" textLength="42.0" lengthAdjust="spacingAndGlyphs" >2022/09</text>
<line x1="81.60" y1="516.20" x2="81.60" y2="534.20" stroke="#9a9a9a" stroke-width="1" />
<text x="83.80" y="529.60" font-size="14" fill="#4c5058" stroke="#4c5058" stroke-width="0.2" font-family="'Liberation Sans','NanumGothic','Noto Sans CJK KR',sans-serif" textLength="11.4" lengthAdjust="spacingAndGlyphs" >11</text>
<line x1="160.30" y1="516.20" x2="160.30" y2="534.20" stroke="#9a9a9a" stroke-width="1" />
<text x="162.50" y="529.60" font-size="14" fill="#4c5058" stroke="#4c5058" stroke-width="0.2" font-family="'Liberation Sans','NanumGothic','Noto Sans CJK KR',sans-serif" textLength="11.4" lengthAdjust="spacingAndGlyphs" >12</text>
<line x1="234.90" y1="516.20" x2="234.90" y2="534.20" stroke="#9a9a9a" stroke-width="1" />
<text x="237.10" y="529.60" font-size="14" fill="#4c5058" stroke="#4c5058" stroke-width="0.2" font-family="'Liberation Sans','NanumGothic','Noto Sans CJK KR',sans-serif" textLength="42.4" lengthAdjust="spacingAndGlyphs" >2023/01</text>
<line x1="305.60" y1="516.20" x2="305.60" y2="534.20" stroke="#9a9a9a" stroke-width="1" />
<text x="307.80" y="529.60" font-size="14" fill="#4c5058" stroke="#4c5058" stroke-width="0.2" font-family="'Liberation Sans','NanumGothic','Noto Sans CJK KR',sans-serif" textLength="11.4" lengthAdjust="spacingAndGlyphs" >02</text>
<line x1="377.00" y1="516.20" x2="377.00" y2="534.20" stroke="#9a9a9a" stroke-width="1" />
<text x="379.20" y="529.60" font-size="14" fill="#4c5058" stroke="#4c5058" stroke-width="0.2" font-family="'Liberation Sans','NanumGothic','Noto Sans CJK KR',sans-serif" textLength="11.4" lengthAdjust="spacingAndGlyphs" >03</text>
<line x1="455.60" y1="516.20" x2="455.60" y2="534.20" stroke="#9a9a9a" stroke-width="1" />
<text x="457.80" y="529.60" font-size="14" fill="#4c5058" stroke="#4c5058" stroke-width="0.2" font-family="'Liberation Sans','NanumGothic','Noto Sans CJK KR',sans-serif" textLength="11.4" lengthAdjust="spacingAndGlyphs" >04</text>
<line x1="526.20" y1="516.20" x2="526.20" y2="534.20" stroke="#9a9a9a" stroke-width="1" />
<text x="528.40" y="529.60" font-size="14" fill="#4c5058" stroke="#4c5058" stroke-width="0.2" font-family="'Liberation Sans','NanumGothic','Noto Sans CJK KR',sans-serif" textLength="11.4" lengthAdjust="spacingAndGlyphs" >05</text>
<line x1="597.00" y1="516.20" x2="597.00" y2="534.20" stroke="#9a9a9a" stroke-width="1" />
<text x="599.20" y="529.60" font-size="14" fill="#4c5058" stroke="#4c5058" stroke-width="0.2" font-family="'Liberation Sans','NanumGothic','Noto Sans CJK KR',sans-serif" textLength="11.4" lengthAdjust="spacingAndGlyphs" >06</text>
<line x1="671.50" y1="516.20" x2="671.50" y2="534.20" stroke="#9a9a9a" stroke-width="1" />
<text x="673.70" y="529.60" font-size="14" fill="#4c5058" stroke="#4c5058" stroke-width="0.2" font-family="'Liberation Sans','NanumGothic','Noto Sans CJK KR',sans-serif" textLength="11.4" lengthAdjust="spacingAndGlyphs" >07</text>
<line x1="746.70" y1="516.20" x2="746.70" y2="534.20" stroke="#9a9a9a" stroke-width="1" />
<text x="748.90" y="529.60" font-size="14" fill="#4c5058" stroke="#4c5058" stroke-width="0.2" font-family="'Liberation Sans','NanumGothic','Noto Sans CJK KR',sans-serif" textLength="11.4" lengthAdjust="spacingAndGlyphs" >08</text>
<line x1="824.20" y1="516.20" x2="824.20" y2="534.20" stroke="#9a9a9a" stroke-width="1" />
<text x="826.40" y="529.60" font-size="14" fill="#4c5058" stroke="#4c5058" stroke-width="0.2" font-family="'Liberation Sans','NanumGothic','Noto Sans CJK KR',sans-serif" textLength="11.4" lengthAdjust="spacingAndGlyphs" >09</text>
<text x="927.60" y="529.60" font-size="14" fill="#4c5058" stroke="#4c5058" stroke-width="0.2" font-family="'Liberation Sans','NanumGothic','Noto Sans CJK KR',sans-serif" textLength="29.8" lengthAdjust="spacingAndGlyphs" >09/26</text>
<rect x="6.0" y="47.5" width="979.00" height="486.90" fill="none" stroke="#a4a4a4" stroke-width="1.1"/>
<line x1="21.60" y1="534.20" x2="21.60" y2="537.00" stroke="#555" stroke-width="1" />
<rect x="985.00" y="47.40" width="1.00" height="487.40" fill="#efefef" />
<rect x="3.30" y="534.90" width="982.70" height="2.10" fill="#ebebeb" />
<line x1="21.60" y1="534.60" x2="21.60" y2="537.00" stroke="#555" stroke-width="1" />
<rect x="10.60" y="54.40" width="3.80" height="4.60" fill="#c8c8c8" stroke="#666" stroke-width="0.9" />
<rect x="17.00" y="49.80" width="65.60" height="13.80" fill="#e9e9e9" stroke="#c2c2c2" stroke-width="0.9" />
<text x="20.80" y="61.20" font-size="13" fill="#222" stroke="#222" stroke-width="0.15" font-family="'Liberation Sans','NanumGothic','Noto Sans CJK KR',sans-serif" textLength="58.8" lengthAdjust="spacingAndGlyphs" >한화시스템</text>
<rect x="86.40" y="54.40" width="3.80" height="4.60" fill="#c8c8c8" stroke="#666" stroke-width="0.9" />
<text x="97.20" y="61.20" font-size="13" fill="#d62fc0" stroke="#d62fc0" stroke-width="0.15" font-family="'Liberation Sans','NanumGothic','Noto Sans CJK KR',sans-serif" textLength="61.8" lengthAdjust="spacingAndGlyphs" >종가 단순 5</text>
<text x="168.00" y="61.20" font-size="14" fill="#2a3fa6" stroke="#2a3fa6" stroke-width="0.2" font-family="'Liberation Sans','NanumGothic','Noto Sans CJK KR',sans-serif" textLength="11.4" lengthAdjust="spacingAndGlyphs" >10</text>
<text x="187.00" y="61.20" font-size="14" fill="#eda51e" stroke="#eda51e" stroke-width="0.2" font-family="'Liberation Sans','NanumGothic','Noto Sans CJK KR',sans-serif" textLength="11.6" lengthAdjust="spacingAndGlyphs" >20</text>
<text x="206.40" y="61.20" font-size="14" fill="#2f9f55" stroke="#2f9f55" stroke-width="0.2" font-family="'Liberation Sans','NanumGothic','Noto Sans CJK KR',sans-serif" textLength="12.4" lengthAdjust="spacingAndGlyphs" >60</text>
<text x="228.00" y="61.20" font-size="14" fill="#767676" stroke="#767676" stroke-width="0.2" font-family="'Liberation Sans','NanumGothic','Noto Sans CJK KR',sans-serif" textLength="16.8" lengthAdjust="spacingAndGlyphs" >120</text>
<rect x="12.60" y="67.60" width="12.80" height="13.60" fill="#a8a8a8" stroke="#222" stroke-width="1.3" rx="1.2"/>
<rect x="14.50" y="70.40" width="2.60" height="3.90" fill="#f4f4f4" />
<rect x="14.50" y="75.30" width="2.60" height="3.90" fill="#f4f4f4" />
<rect x="17.90" y="70.40" width="2.60" height="3.90" fill="#f4f4f4" />
<rect x="17.90" y="75.30" width="2.60" height="3.90" fill="#f4f4f4" />
<rect x="21.30" y="70.40" width="2.60" height="3.90" fill="#f4f4f4" />
<rect x="21.30" y="75.30" width="2.60" height="3.90" fill="#f4f4f4" />
<rect x="10.60" y="367.00" width="3.80" height="4.60" fill="#c8c8c8" stroke="#666" stroke-width="0.9" />
<text x="21.40" y="374.40" font-size="13" fill="#3fa3a3" stroke="#3fa3a3" stroke-width="0.15" font-family="'Liberation Sans','NanumGothic','Noto Sans CJK KR',sans-serif" textLength="35.2" lengthAdjust="spacingAndGlyphs" >거래량</text>
<text x="65.20" y="374.40" font-size="13" fill="#d62fc0" stroke="#d62fc0" stroke-width="0.15" font-family="'Liberation Sans','NanumGothic','Noto Sans CJK KR',sans-serif" textLength="34.0" lengthAdjust="spacingAndGlyphs" >단순 5</text>
<text x="107.40" y="374.40" font-size="14" fill="#eda51e" stroke="#eda51e" stroke-width="0.2" font-family="'Liberation Sans','NanumGothic','Noto Sans CJK KR',sans-serif" textLength="11.6" lengthAdjust="spacingAndGlyphs" >20</text>
<text x="127.00" y="374.40" font-size="14" fill="#2f9f55" stroke="#2f9f55" stroke-width="0.2" font-family="'Liberation Sans','NanumGothic','Noto Sans CJK KR',sans-serif" textLength="12.4" lengthAdjust="spacingAndGlyphs" >60</text>
<text x="148.00" y="374.40" font-size="14" fill="#767676" stroke="#767676" stroke-width="0.2" font-family="'Liberation Sans','NanumGothic','Noto Sans CJK KR',sans-serif" textLength="16.8" lengthAdjust="spacingAndGlyphs" >120</text>
<text x="11.60" y="387.60" font-size="13" fill="#3c3c3c" stroke="#3c3c3c" stroke-width="0.15" font-family="'Liberation Sans','NanumGothic','Noto Sans CJK KR',sans-serif" textLength="80.4" lengthAdjust="spacingAndGlyphs" >3,927주(1,24%)</text>
<text x="568.00" y="73.20" font-size="13" fill="#e0261c" stroke="#e0261c" stroke-width="0.15" font-family="'Liberation Sans','NanumGothic','Noto Sans CJK KR',sans-serif" textLength="104.8" lengthAdjust="spacingAndGlyphs" >최고 17,720 (07/11)</text>
<path d="M678.2 68.9 H689 M692.8 68.9 L687.6 64.6 L687.6 73.2 Z" stroke="#e0261c" stroke-width="1.2" fill="#e0261c"/>
<text x="53.60" y="342.60" font-size="13" fill="#2222cc" stroke="#2222cc" stroke-width="0.15" font-family="'Liberation Sans','NanumGothic','Noto Sans CJK KR',sans-serif" textLength="104.6" lengthAdjust="spacingAndGlyphs" >최저 10,150 (10/13)</text>
<path d="M44.4 338.2 H52.6 M39.0 338.2 L44.6 333.6 L44.6 342.8 Z" stroke="#1a1ad0" stroke-width="1.2" fill="#1a1ad0"/>
<text x="188.40" y="271.60" font-size="13" fill="#333" stroke="#333" stroke-width="0.15" font-family="'Liberation Sans','NanumGothic','Noto Sans CJK KR',sans-serif" textLength="76.6" lengthAdjust="spacingAndGlyphs" >배당락(0,00%)</text>
<path d="M227.9 274.6 V286 M223.2 288.0 L232.6 288.0 L227.9 293.6 Z" stroke="#e0261c" stroke-width="1.2" fill="#e0261c"/>
</svg>
</body>
</html>
